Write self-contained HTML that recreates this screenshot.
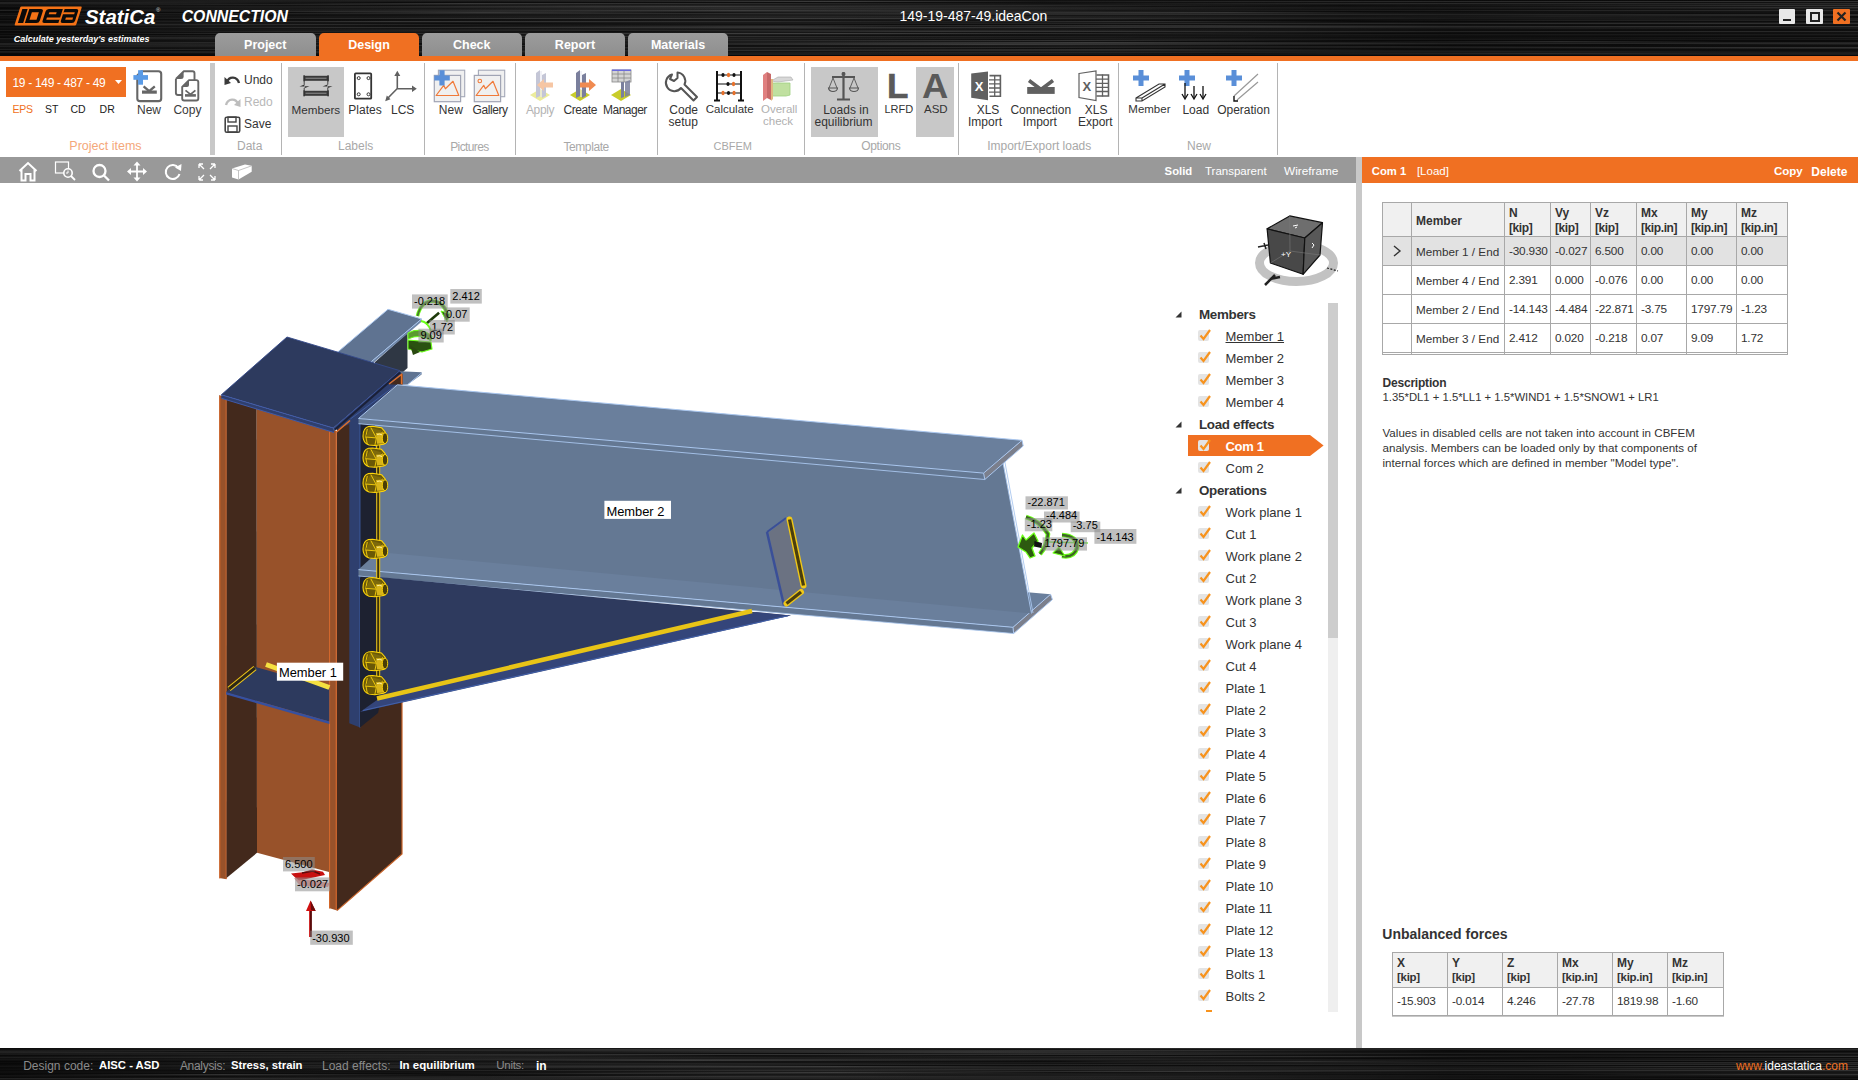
<!DOCTYPE html><html><head><meta charset="utf-8"><style>
html,body{margin:0;padding:0;}
body{width:1858px;height:1080px;overflow:hidden;position:relative;background:#fff;font-family:"Liberation Sans",sans-serif;}
.t{position:absolute;white-space:nowrap;line-height:1;}
.abs{position:absolute;}
svg{position:absolute;overflow:visible}
</style></head><body>
<div style="position:absolute;left:0;top:0px;width:1858px;height:56px;background:#1c1c1c;overflow:hidden"><div style="position:absolute;left:0;top:0px;width:1858px;height:1px;background:linear-gradient(90deg,rgb(34,34,34) 0%,rgb(38,38,38) 29%,rgb(18,18,18) 51%,rgb(18,18,18) 77%,rgb(14,14,14) 93%)"></div><div style="position:absolute;left:0;top:1px;width:1858px;height:1px;background:linear-gradient(90deg,rgb(26,26,26) 0%,rgb(38,38,38) 9%,rgb(26,26,26) 26%,rgb(38,38,38) 36%,rgb(62,62,62) 45%,rgb(26,26,26) 56%,rgb(62,62,62) 78%)"></div><div style="position:absolute;left:0;top:2px;width:1858px;height:1px;background:linear-gradient(90deg,rgb(62,62,62) 0%,rgb(14,14,14) 21%,rgb(14,14,14) 50%,rgb(22,22,22) 71%,rgb(22,22,22) 85%)"></div><div style="position:absolute;left:0;top:3px;width:1858px;height:1px;background:linear-gradient(90deg,rgb(62,62,62) 0%,rgb(22,22,22) 15%,rgb(62,62,62) 25%,rgb(34,34,34) 47%,rgb(18,18,18) 57%,rgb(62,62,62) 78%,rgb(52,52,52) 90%)"></div><div style="position:absolute;left:0;top:4px;width:1858px;height:1px;background:linear-gradient(90deg,rgb(34,34,34) 0%,rgb(44,44,44) 18%,rgb(26,26,26) 34%,rgb(26,26,26) 60%,rgb(30,30,30) 69%,rgb(34,34,34) 89%)"></div><div style="position:absolute;left:0;top:5px;width:1858px;height:1px;background:linear-gradient(90deg,rgb(30,30,30) 0%,rgb(18,18,18) 21%,rgb(38,38,38) 32%,rgb(34,34,34) 44%,rgb(44,44,44) 55%,rgb(18,18,18) 72%,rgb(62,62,62) 97%)"></div><div style="position:absolute;left:0;top:6px;width:1858px;height:1px;background:linear-gradient(90deg,rgb(34,34,34) 0%,rgb(34,34,34) 15%,rgb(62,62,62) 37%,rgb(18,18,18) 62%,rgb(30,30,30) 89%)"></div><div style="position:absolute;left:0;top:7px;width:1858px;height:1px;background:linear-gradient(90deg,rgb(18,18,18) 0%,rgb(30,30,30) 9%,rgb(44,44,44) 32%,rgb(38,38,38) 46%,rgb(34,34,34) 73%,rgb(44,44,44) 82%,rgb(62,62,62) 98%)"></div><div style="position:absolute;left:0;top:8px;width:1858px;height:1px;background:linear-gradient(90deg,rgb(14,14,14) 0%,rgb(30,30,30) 13%,rgb(26,26,26) 24%,rgb(44,44,44) 40%,rgb(44,44,44) 50%,rgb(30,30,30) 67%,rgb(38,38,38) 94%)"></div><div style="position:absolute;left:0;top:9px;width:1858px;height:1px;background:linear-gradient(90deg,rgb(30,30,30) 0%,rgb(34,34,34) 24%,rgb(38,38,38) 47%,rgb(22,22,22) 76%,rgb(22,22,22) 85%,rgb(26,26,26) 99%)"></div><div style="position:absolute;left:0;top:10px;width:1858px;height:1px;background:linear-gradient(90deg,rgb(62,62,62) 0%,rgb(30,30,30) 12%,rgb(38,38,38) 20%,rgb(62,62,62) 40%,rgb(22,22,22) 60%,rgb(52,52,52) 84%)"></div><div style="position:absolute;left:0;top:11px;width:1858px;height:1px;background:linear-gradient(90deg,rgb(14,14,14) 0%,rgb(52,52,52) 18%,rgb(38,38,38) 35%,rgb(44,44,44) 51%,rgb(14,14,14) 73%,rgb(26,26,26) 85%)"></div><div style="position:absolute;left:0;top:12px;width:1858px;height:1px;background:linear-gradient(90deg,rgb(18,18,18) 0%,rgb(14,14,14) 15%,rgb(62,62,62) 26%,rgb(18,18,18) 37%,rgb(62,62,62) 66%,rgb(26,26,26) 74%,rgb(22,22,22) 96%)"></div><div style="position:absolute;left:0;top:13px;width:1858px;height:1px;background:linear-gradient(90deg,rgb(34,34,34) 0%,rgb(44,44,44) 21%,rgb(44,44,44) 32%,rgb(44,44,44) 62%,rgb(30,30,30) 80%,rgb(18,18,18) 90%)"></div><div style="position:absolute;left:0;top:14px;width:1858px;height:1px;background:linear-gradient(90deg,rgb(30,30,30) 0%,rgb(22,22,22) 19%,rgb(26,26,26) 38%,rgb(52,52,52) 67%,rgb(52,52,52) 83%)"></div><div style="position:absolute;left:0;top:15px;width:1858px;height:1px;background:linear-gradient(90deg,rgb(52,52,52) 0%,rgb(18,18,18) 15%,rgb(30,30,30) 38%,rgb(22,22,22) 57%,rgb(26,26,26) 73%,rgb(52,52,52) 93%)"></div><div style="position:absolute;left:0;top:16px;width:1858px;height:1px;background:linear-gradient(90deg,rgb(26,26,26) 0%,rgb(26,26,26) 21%,rgb(38,38,38) 47%,rgb(26,26,26) 72%,rgb(44,44,44) 84%,rgb(14,14,14) 100%)"></div><div style="position:absolute;left:0;top:17px;width:1858px;height:1px;background:linear-gradient(90deg,rgb(30,30,30) 0%,rgb(26,26,26) 18%,rgb(34,34,34) 42%,rgb(34,34,34) 59%,rgb(34,34,34) 88%,rgb(18,18,18) 98%)"></div><div style="position:absolute;left:0;top:18px;width:1858px;height:1px;background:linear-gradient(90deg,rgb(26,26,26) 0%,rgb(44,44,44) 15%,rgb(62,62,62) 37%,rgb(44,44,44) 64%,rgb(34,34,34) 92%)"></div><div style="position:absolute;left:0;top:19px;width:1858px;height:1px;background:linear-gradient(90deg,rgb(18,18,18) 0%,rgb(18,18,18) 26%,rgb(26,26,26) 54%,rgb(22,22,22) 73%,rgb(34,34,34) 90%)"></div><div style="position:absolute;left:0;top:20px;width:1858px;height:1px;background:linear-gradient(90deg,rgb(38,38,38) 0%,rgb(18,18,18) 18%,rgb(22,22,22) 42%,rgb(14,14,14) 72%,rgb(44,44,44) 83%)"></div><div style="position:absolute;left:0;top:21px;width:1858px;height:1px;background:linear-gradient(90deg,rgb(22,22,22) 0%,rgb(62,62,62) 21%,rgb(34,34,34) 51%,rgb(52,52,52) 62%,rgb(14,14,14) 73%,rgb(18,18,18) 99%)"></div><div style="position:absolute;left:0;top:22px;width:1858px;height:1px;background:linear-gradient(90deg,rgb(22,22,22) 0%,rgb(26,26,26) 18%,rgb(26,26,26) 44%,rgb(26,26,26) 52%,rgb(26,26,26) 67%,rgb(34,34,34) 92%)"></div><div style="position:absolute;left:0;top:23px;width:1858px;height:1px;background:linear-gradient(90deg,rgb(38,38,38) 0%,rgb(14,14,14) 26%,rgb(34,34,34) 54%,rgb(62,62,62) 82%)"></div><div style="position:absolute;left:0;top:24px;width:1858px;height:1px;background:linear-gradient(90deg,rgb(52,52,52) 0%,rgb(52,52,52) 17%,rgb(22,22,22) 28%,rgb(14,14,14) 48%,rgb(22,22,22) 75%,rgb(22,22,22) 96%)"></div><div style="position:absolute;left:0;top:25px;width:1858px;height:1px;background:linear-gradient(90deg,rgb(44,44,44) 0%,rgb(18,18,18) 22%,rgb(34,34,34) 42%,rgb(52,52,52) 65%,rgb(18,18,18) 85%)"></div><div style="position:absolute;left:0;top:26px;width:1858px;height:1px;background:linear-gradient(90deg,rgb(14,14,14) 0%,rgb(30,30,30) 13%,rgb(18,18,18) 22%,rgb(52,52,52) 42%,rgb(18,18,18) 50%,rgb(62,62,62) 68%,rgb(62,62,62) 97%)"></div><div style="position:absolute;left:0;top:27px;width:1858px;height:1px;background:linear-gradient(90deg,rgb(30,30,30) 0%,rgb(52,52,52) 18%,rgb(52,52,52) 44%,rgb(52,52,52) 72%,rgb(30,30,30) 100%)"></div><div style="position:absolute;left:0;top:28px;width:1858px;height:1px;background:linear-gradient(90deg,rgb(26,26,26) 0%,rgb(22,22,22) 26%,rgb(38,38,38) 44%,rgb(18,18,18) 61%,rgb(38,38,38) 84%,rgb(30,30,30) 94%)"></div><div style="position:absolute;left:0;top:29px;width:1858px;height:1px;background:linear-gradient(90deg,rgb(22,22,22) 0%,rgb(34,34,34) 29%,rgb(22,22,22) 40%,rgb(26,26,26) 69%,rgb(18,18,18) 94%)"></div><div style="position:absolute;left:0;top:30px;width:1858px;height:1px;background:linear-gradient(90deg,rgb(44,44,44) 0%,rgb(26,26,26) 12%,rgb(38,38,38) 23%,rgb(38,38,38) 53%,rgb(26,26,26) 68%,rgb(18,18,18) 84%)"></div><div style="position:absolute;left:0;top:31px;width:1858px;height:1px;background:linear-gradient(90deg,rgb(14,14,14) 0%,rgb(44,44,44) 15%,rgb(14,14,14) 33%,rgb(52,52,52) 50%,rgb(52,52,52) 71%)"></div><div style="position:absolute;left:0;top:32px;width:1858px;height:1px;background:linear-gradient(90deg,rgb(18,18,18) 0%,rgb(26,26,26) 30%,rgb(18,18,18) 59%,rgb(30,30,30) 69%,rgb(22,22,22) 78%,rgb(22,22,22) 92%)"></div><div style="position:absolute;left:0;top:33px;width:1858px;height:1px;background:linear-gradient(90deg,rgb(30,30,30) 0%,rgb(52,52,52) 17%,rgb(62,62,62) 45%,rgb(34,34,34) 64%,rgb(14,14,14) 74%,rgb(22,22,22) 100%)"></div><div style="position:absolute;left:0;top:34px;width:1858px;height:1px;background:linear-gradient(90deg,rgb(18,18,18) 0%,rgb(14,14,14) 14%,rgb(30,30,30) 36%,rgb(26,26,26) 46%,rgb(18,18,18) 55%,rgb(34,34,34) 73%)"></div><div style="position:absolute;left:0;top:35px;width:1858px;height:1px;background:linear-gradient(90deg,rgb(38,38,38) 0%,rgb(30,30,30) 28%,rgb(14,14,14) 50%,rgb(26,26,26) 70%,rgb(22,22,22) 98%)"></div><div style="position:absolute;left:0;top:36px;width:1858px;height:1px;background:linear-gradient(90deg,rgb(22,22,22) 0%,rgb(30,30,30) 12%,rgb(52,52,52) 34%,rgb(30,30,30) 59%,rgb(22,22,22) 77%,rgb(14,14,14) 91%)"></div><div style="position:absolute;left:0;top:37px;width:1858px;height:1px;background:linear-gradient(90deg,rgb(14,14,14) 0%,rgb(52,52,52) 8%,rgb(26,26,26) 28%,rgb(26,26,26) 48%,rgb(18,18,18) 76%,rgb(38,38,38) 99%)"></div><div style="position:absolute;left:0;top:38px;width:1858px;height:1px;background:linear-gradient(90deg,rgb(52,52,52) 0%,rgb(38,38,38) 26%,rgb(30,30,30) 56%,rgb(26,26,26) 79%,rgb(22,22,22) 94%)"></div><div style="position:absolute;left:0;top:39px;width:1858px;height:1px;background:linear-gradient(90deg,rgb(34,34,34) 0%,rgb(22,22,22) 30%,rgb(30,30,30) 38%,rgb(14,14,14) 55%,rgb(38,38,38) 65%,rgb(30,30,30) 92%)"></div><div style="position:absolute;left:0;top:40px;width:1858px;height:1px;background:linear-gradient(90deg,rgb(30,30,30) 0%,rgb(22,22,22) 9%,rgb(44,44,44) 20%,rgb(34,34,34) 29%,rgb(52,52,52) 58%,rgb(14,14,14) 73%)"></div><div style="position:absolute;left:0;top:41px;width:1858px;height:1px;background:linear-gradient(90deg,rgb(30,30,30) 0%,rgb(22,22,22) 13%,rgb(38,38,38) 21%,rgb(30,30,30) 31%,rgb(26,26,26) 50%,rgb(14,14,14) 63%,rgb(18,18,18) 73%,rgb(62,62,62) 84%,rgb(14,14,14) 93%)"></div><div style="position:absolute;left:0;top:42px;width:1858px;height:1px;background:linear-gradient(90deg,rgb(26,26,26) 0%,rgb(52,52,52) 10%,rgb(22,22,22) 37%,rgb(62,62,62) 59%,rgb(34,34,34) 76%,rgb(44,44,44) 100%)"></div><div style="position:absolute;left:0;top:43px;width:1858px;height:1px;background:linear-gradient(90deg,rgb(62,62,62) 0%,rgb(14,14,14) 22%,rgb(52,52,52) 48%,rgb(52,52,52) 70%,rgb(52,52,52) 81%)"></div><div style="position:absolute;left:0;top:44px;width:1858px;height:1px;background:linear-gradient(90deg,rgb(62,62,62) 0%,rgb(14,14,14) 26%,rgb(62,62,62) 53%,rgb(26,26,26) 78%,rgb(14,14,14) 88%,rgb(34,34,34) 99%)"></div><div style="position:absolute;left:0;top:45px;width:1858px;height:1px;background:linear-gradient(90deg,rgb(38,38,38) 0%,rgb(52,52,52) 26%,rgb(14,14,14) 36%,rgb(26,26,26) 57%,rgb(14,14,14) 76%,rgb(18,18,18) 94%)"></div><div style="position:absolute;left:0;top:46px;width:1858px;height:1px;background:linear-gradient(90deg,rgb(52,52,52) 0%,rgb(18,18,18) 28%,rgb(18,18,18) 50%,rgb(44,44,44) 75%,rgb(18,18,18) 88%)"></div><div style="position:absolute;left:0;top:47px;width:1858px;height:1px;background:linear-gradient(90deg,rgb(26,26,26) 0%,rgb(26,26,26) 24%,rgb(44,44,44) 37%,rgb(38,38,38) 56%,rgb(30,30,30) 66%,rgb(62,62,62) 91%)"></div><div style="position:absolute;left:0;top:48px;width:1858px;height:1px;background:linear-gradient(90deg,rgb(26,26,26) 0%,rgb(22,22,22) 10%,rgb(30,30,30) 25%,rgb(22,22,22) 47%,rgb(14,14,14) 55%,rgb(18,18,18) 74%,rgb(44,44,44) 97%)"></div><div style="position:absolute;left:0;top:49px;width:1858px;height:1px;background:linear-gradient(90deg,rgb(52,52,52) 0%,rgb(44,44,44) 14%,rgb(18,18,18) 33%,rgb(52,52,52) 62%,rgb(18,18,18) 75%)"></div><div style="position:absolute;left:0;top:50px;width:1858px;height:1px;background:linear-gradient(90deg,rgb(14,14,14) 0%,rgb(18,18,18) 14%,rgb(44,44,44) 40%,rgb(38,38,38) 70%,rgb(26,26,26) 83%,rgb(18,18,18) 93%)"></div><div style="position:absolute;left:0;top:51px;width:1858px;height:1px;background:linear-gradient(90deg,rgb(52,52,52) 0%,rgb(34,34,34) 14%,rgb(52,52,52) 25%,rgb(18,18,18) 39%,rgb(26,26,26) 62%,rgb(44,44,44) 81%,rgb(22,22,22) 98%)"></div><div style="position:absolute;left:0;top:52px;width:1858px;height:1px;background:linear-gradient(90deg,rgb(44,44,44) 0%,rgb(38,38,38) 23%,rgb(22,22,22) 38%,rgb(38,38,38) 55%,rgb(34,34,34) 70%,rgb(34,34,34) 78%)"></div><div style="position:absolute;left:0;top:53px;width:1858px;height:1px;background:linear-gradient(90deg,rgb(18,18,18) 0%,rgb(26,26,26) 29%,rgb(30,30,30) 52%,rgb(18,18,18) 66%,rgb(62,62,62) 83%,rgb(38,38,38) 92%)"></div><div style="position:absolute;left:0;top:54px;width:1858px;height:1px;background:linear-gradient(90deg,rgb(14,14,14) 0%,rgb(14,14,14) 14%,rgb(30,30,30) 41%,rgb(22,22,22) 63%,rgb(30,30,30) 76%,rgb(34,34,34) 94%)"></div><div style="position:absolute;left:0;top:55px;width:1858px;height:1px;background:linear-gradient(90deg,rgb(34,34,34) 0%,rgb(38,38,38) 25%,rgb(38,38,38) 53%,rgb(52,52,52) 81%)"></div><div style="position:absolute;left:0;top:0;width:1858px;height:100%;background:linear-gradient(90deg,rgba(0,0,0,.45) 0%,rgba(0,0,0,.2) 12%,rgba(0,0,0,0) 40%,rgba(0,0,0,.05) 60%,rgba(0,0,0,.35) 78%,rgba(0,0,0,.2) 100%)"></div></div>
<div class="abs" style="left:0;top:55px;width:1858px;height:1px;background:#06090d"></div>
<svg style="left:0;top:0" width="300" height="56">
<g transform="matrix(1 0 -0.32 1 8.224 0)">
<rect x="14.3" y="6.5" width="61.6" height="19" rx="1.2" fill="#f47216"/>
<path d="M17 9 H22.3 V23 H17 Z" fill="#0a0a0a"/>
<path d="M24 9 H35.5 Q38.2 9 38.2 11.5 V20.5 Q38.2 23 35.5 23 H24 Z" fill="#0a0a0a"/>
<rect x="27.6" y="12.3" width="7" height="7.4" fill="#f47216"/>
<path d="M41 11.5 Q41 9 43.5 9 H57.5 V23 H43.5 Q41 23 41 20.5 Z" fill="#0a0a0a"/>
<rect x="45" y="12.3" width="7.4" height="1.9" fill="#f47216"/>
<rect x="44.3" y="17.5" width="13.5" height="2.2" fill="#f47216"/>
<path d="M59.3 9 H71 Q73.5 9 73.5 11.5 V20.5 Q73.5 23 71 23 H61.8 Q59.3 23 59.3 20.5 Z" fill="#0a0a0a"/>
<rect x="59" y="12.3" width="11.5" height="1.9" fill="#f47216"/>
<rect x="63.3" y="17.5" width="7.2" height="2.2" fill="#f47216"/>
</g>
<text x="85" y="23.5" font-family="Liberation Sans" font-weight="bold" font-style="italic" font-size="20.4" fill="#fff">StatiCa</text>
<text x="156" y="12" font-family="Liberation Sans" font-size="6" fill="#ddd">®</text>
<text x="181.7" y="21.8" font-family="Liberation Sans" font-weight="bold" font-style="italic" font-size="15.8" fill="#fff">CONNECTION</text>
<text x="13.7" y="42" font-family="Liberation Sans" font-weight="bold" font-style="italic" font-size="9" fill="#fff">Calculate yesterday's estimates</text>
</svg>
<div class="t" style="left:899.4px;top:8.6px;font-size:14px;color:#fff;">149-19-487-49.ideaCon</div>
<div class="abs" style="left:1779px;top:9px;width:16px;height:15px;background:#e8e8e8;border-radius:1px"><div class="abs" style="left:4px;top:10px;width:8px;height:2px;background:#222"></div></div>
<div class="abs" style="left:1806px;top:9px;width:17px;height:15px;background:#e8e8e8;border-radius:1px"><div class="abs" style="left:4px;top:3px;width:6px;height:6px;border:2px solid #222"></div></div>
<div class="abs" style="left:1833px;top:9px;width:17px;height:15px;background:#f07022;border-radius:1px"><svg style="left:0;top:0" width="17" height="15"><path d="M4.5 3.5 L12.5 11.5 M12.5 3.5 L4.5 11.5" stroke="#222" stroke-width="2.2"/></svg></div>
<div class="abs" style="left:215px;top:33px;width:100.5px;height:24px;background:linear-gradient(#9c9c9c,#8e8e8e);border-radius:5px 5px 0 0"></div>
<div class="t" style="left:65.25px;width:400px;text-align:center;top:38.9px;font-size:12.5px;color:#fff;font-weight:bold;">Project</div>
<div class="abs" style="left:319px;top:33px;width:100px;height:24px;background:#f07022;border-radius:5px 5px 0 0"></div>
<div class="t" style="left:169.0px;width:400px;text-align:center;top:38.9px;font-size:12.5px;color:#fff;font-weight:bold;">Design</div>
<div class="abs" style="left:422px;top:33px;width:99.5px;height:24px;background:linear-gradient(#9c9c9c,#8e8e8e);border-radius:5px 5px 0 0"></div>
<div class="t" style="left:271.75px;width:400px;text-align:center;top:38.9px;font-size:12.5px;color:#fff;font-weight:bold;">Check</div>
<div class="abs" style="left:525px;top:33px;width:100px;height:24px;background:linear-gradient(#9c9c9c,#8e8e8e);border-radius:5px 5px 0 0"></div>
<div class="t" style="left:375.0px;width:400px;text-align:center;top:38.9px;font-size:12.5px;color:#fff;font-weight:bold;">Report</div>
<div class="abs" style="left:628px;top:33px;width:100px;height:24px;background:linear-gradient(#9c9c9c,#8e8e8e);border-radius:5px 5px 0 0"></div>
<div class="t" style="left:478.0px;width:400px;text-align:center;top:38.9px;font-size:12.5px;color:#fff;font-weight:bold;">Materials</div>
<div class="abs" style="left:0;top:56px;width:1858px;height:5px;background:#f07022"></div>
<div class="abs" style="left:6px;top:67px;width:120px;height:30px;background:#f07022"></div>
<div class="t" style="left:12.4px;top:77.2px;font-size:12px;color:#fff;letter-spacing:-0.3px;">19 - 149 - 487 - 49</div>
<svg style="left:115px;top:80px" width="8" height="5"><path d="M0 0 H7 L3.5 4 Z" fill="#fff"/></svg>
<div class="t" style="left:12.5px;top:103.9px;font-size:10.5px;color:#f07022;letter-spacing:-0.2px">EPS</div>
<div class="t" style="left:45px;top:103.9px;font-size:10.5px;color:#1a1a1a;">ST</div>
<div class="t" style="left:70.5px;top:103.9px;font-size:10.5px;color:#1a1a1a;">CD</div>
<div class="t" style="left:99.6px;top:103.9px;font-size:10.5px;color:#1a1a1a;">DR</div>
<svg style="left:133px;top:70px" width="30" height="33">
<path d="M4.3 5.5 L8.4 1.3 H25.5 Q28.2 1.3 28.2 4 V28.4 Q28.2 31.1 25.5 31.1 H7 Q4.3 31.1 4.3 28.4 Z" fill="#fff" stroke="#666" stroke-width="2.1" stroke-linejoin="round"/>
<path d="M10.6 16.3 L16.2 21.2 L21.8 16.3" fill="none" stroke="#666" stroke-width="2.3"/>
<rect x="9" y="20.5" width="14.8" height="3.2" fill="#666"/>
<rect x="0.4" y="5.1" width="14.6" height="4.7" fill="#5a9be6"/><rect x="5.1" y="0.2" width="4.9" height="14.5" fill="#5a9be6"/>
</svg>
<svg style="left:175px;top:70px" width="26" height="33">
<path d="M0.9 9 L8.6 1.3 H17.5 Q19.5 1.3 19.5 3.3 V10.5 M7.2 25 H3 Q0.9 25 0.9 23 V9" fill="none" stroke="#666" stroke-width="1.9" stroke-linejoin="round"/>
<path d="M0.9 9 L8.6 1.3 V6.5 Q8.6 9 6 9 Z" fill="#666"/>
<path d="M7.2 17 L14 10.1 H21.3 Q23.3 10.1 23.3 12.1 V28.5 Q23.3 30.5 21.3 30.5 H9.2 Q7.2 30.5 7.2 28.5 Z" fill="#fff" stroke="#666" stroke-width="1.9" stroke-linejoin="round"/>
<path d="M7.2 17 L14 10.1 V15 Q14 17 12 17 Z" fill="#666"/>
<path d="M10.5 20.4 L15.5 24.4 L20.4 20.4" fill="none" stroke="#666" stroke-width="1.8"/>
<rect x="10" y="24.1" width="10.9" height="2.6" fill="#666"/>
</svg>
<div class="t" style="left:137px;top:103.9px;font-size:12px;color:#3a3a3a;">New</div>
<div class="t" style="left:173.4px;top:103.9px;font-size:12px;color:#3a3a3a;">Copy</div>
<div class="t" style="left:69.3px;top:140.2px;font-size:12.5px;color:#f4a77a;">Project items</div>
<div class="abs" style="left:210px;top:63px;width:5px;height:92px;background:#c8c8c8"></div>
<div class="abs" style="left:281px;top:63px;width:1px;height:92px;background:#b4b4b4"></div>
<div class="abs" style="left:424px;top:63px;width:1px;height:92px;background:#b4b4b4"></div>
<div class="abs" style="left:515px;top:63px;width:1px;height:92px;background:#b4b4b4"></div>
<div class="abs" style="left:657px;top:63px;width:1px;height:92px;background:#b4b4b4"></div>
<div class="abs" style="left:804px;top:63px;width:1px;height:92px;background:#b4b4b4"></div>
<div class="abs" style="left:958px;top:63px;width:1px;height:92px;background:#b4b4b4"></div>
<div class="abs" style="left:1118px;top:63px;width:1px;height:92px;background:#b4b4b4"></div>
<div class="abs" style="left:1277px;top:63px;width:1px;height:92px;background:#b4b4b4"></div>
<svg style="left:224px;top:73px" width="17" height="60">
<path d="M3 9 C5 3, 13 3, 15 10" fill="none" stroke="#3a3a3a" stroke-width="2.4"/>
<path d="M0.5 4 L7 10 L0.5 12 Z" fill="#3a3a3a"/>
<path d="M14 31 C12 25, 4 25, 2 32" fill="none" stroke="#bdbdbd" stroke-width="2.4"/>
<path d="M16.5 26 L10 32 L16.5 34 Z" fill="#bdbdbd"/>
<rect x="1.2" y="44.2" width="14.5" height="15" rx="1.5" fill="none" stroke="#444" stroke-width="1.6"/>
<rect x="4" y="44" width="8" height="5" fill="none" stroke="#444" stroke-width="1.4"/>
<rect x="4" y="53" width="9" height="6" fill="none" stroke="#444" stroke-width="1.4"/>
</svg>
<div class="t" style="left:244px;top:74.1px;font-size:12px;color:#333;">Undo</div>
<div class="t" style="left:244px;top:96.1px;font-size:12px;color:#b8b8b8;">Redo</div>
<div class="t" style="left:244px;top:118.0px;font-size:12px;color:#333;">Save</div>
<div class="t" style="left:237px;top:140.3px;font-size:12px;color:#a8a8a8;">Data</div>
<div class="abs" style="left:288px;top:67px;width:56px;height:70px;background:#c8c8c8"></div>
<svg style="left:299px;top:75px" width="34" height="22">
<rect x="5" y="0.8" width="24" height="5" fill="#3a3a3a"/><rect x="6.5" y="2.6" width="21" height="1.4" fill="#777"/>
<rect x="5" y="15.8" width="24" height="5" fill="#3a3a3a"/><rect x="6.5" y="17.6" width="21" height="1.4" fill="#777"/>
<rect x="4.3" y="0.3" width="1.6" height="6" fill="#333"/><rect x="28.3" y="0.3" width="1.6" height="6" fill="#333"/>
<rect x="4.3" y="15.3" width="1.6" height="6" fill="#333"/><rect x="28.3" y="15.3" width="1.6" height="6" fill="#333"/>
<path d="M5.2 6 V9.5 M5.2 13 V16 M28.8 6 V9.5 M28.8 13 V16" stroke="#444" stroke-width="1"/>
<path d="M0.5 11.5 L6 9.3 L5 11.3 L10.5 11.3 L5.3 13.2 L6 11.6 Z" fill="#333"/>
<path d="M23.5 11.5 L29 9.3 L28 11.3 L33.5 11.3 L28.3 13.2 L29 11.6 Z" fill="#333"/>
</svg>
<div class="t" style="left:291.5px;top:104.2px;font-size:11.7px;color:#333;">Members</div>
<svg style="left:353px;top:72px" width="20" height="28">
<rect x="1.9" y="1.4" width="16.3" height="25.3" rx="0.8" fill="none" stroke="#333" stroke-width="1.8"/>
<circle cx="5.7" cy="6.1" r="1.5" fill="none" stroke="#333" stroke-width="1"/><circle cx="15.5" cy="6.1" r="1.5" fill="none" stroke="#333" stroke-width="1"/>
<circle cx="5.7" cy="22.3" r="1.5" fill="none" stroke="#333" stroke-width="1"/><circle cx="15.5" cy="22.3" r="1.5" fill="none" stroke="#333" stroke-width="1"/>
</svg>
<div class="t" style="left:348.3px;top:104.1px;font-size:12px;color:#333;">Plates</div>
<svg style="left:384px;top:70px" width="34" height="34">
<path d="M13.3 18.5 V4 M13.3 18.5 L29 18.8 M13.3 18.5 L3.5 28.5" stroke="#606060" stroke-width="1.6" fill="none"/>
<path d="M10.3 6 L13.3 0.8 L16.3 6 Z M28 15.6 L32.8 18.8 L28 22 Z M1.2 31.2 L2.8 25.4 L6.5 29.2 Z" fill="#606060"/>
</svg>
<div class="t" style="left:391px;top:104.1px;font-size:12px;color:#333;">LCS</div>
<div class="t" style="left:338px;top:140.3px;font-size:12px;color:#a8a8a8;">Labels</div>
<svg style="left:433px;top:69px" width="34" height="34">
<rect x="5.4" y="1.2" width="26.3" height="26.5" fill="#f0f0f0" stroke="#a4a8b8" stroke-width="1.1"/>
<rect x="1.3" y="6.4" width="26.3" height="26.3" fill="#f0f0f0" stroke="#a0a4b4" stroke-width="1.2"/>
<path d="M3.1 26.5 L10.7 16.3 L12.4 19.8 L20 12.3 L25.8 26.5 Z" fill="none" stroke="#f07a3a" stroke-width="1.2" stroke-linejoin="round"/><path d="M1.3 9 H16.8 M9 1.2 V16.6" stroke="#5a8fd8" stroke-width="5.2"/></svg>
<svg style="left:473px;top:69px" width="34" height="34">
<rect x="5.4" y="1.2" width="26.3" height="26.5" fill="#f0f0f0" stroke="#a4a8b8" stroke-width="1.1"/>
<rect x="1.3" y="6.4" width="26.3" height="26.3" fill="#f0f0f0" stroke="#a0a4b4" stroke-width="1.2"/>
<path d="M3.1 26.5 L10.7 16.3 L12.4 19.8 L20 12.3 L25.8 26.5 Z" fill="none" stroke="#f07a3a" stroke-width="1.2" stroke-linejoin="round"/><circle cx="6.8" cy="12" r="1.8" fill="none" stroke="#f07a3a" stroke-width="1.1"/></svg>
<div class="t" style="left:438.8px;top:104.0px;font-size:12px;color:#333;">New</div>
<div class="t" style="left:472.5px;top:104.0px;font-size:12px;color:#333;letter-spacing:-0.4px">Gallery</div>
<div class="t" style="left:450.2px;top:140.5px;font-size:12px;color:#a8a8a8;letter-spacing:-0.6px">Pictures</div>
<svg style="left:530px;top:69px" width="40" height="34" opacity="1"><path d="M0 26 L10 20 L20 26 L10 32 Z" fill="#ecec9c"/><path d="M6 4 L10 1 V27 L6 29 Z" fill="#c4c6d6"/><path d="M10 2 H12 V28 H10 Z" fill="#e8e8f0" opacity="0.6"/><path d="M12 6 L16 4 V27 L12 29 Z" fill="#c4c6d6"/><path d="M7 16 L14 10 V13.5 H23 V18.5 H14 V22 Z" fill="#f6c6a4"/></svg>
<svg style="left:570px;top:69px" width="40" height="34" opacity="1"><path d="M0 26 L10 20 L20 26 L10 32 Z" fill="#c8cc2a"/><path d="M6 4 L10 1 V27 L6 29 Z" fill="#7a7f9c"/><path d="M10 2 H12 V28 H10 Z" fill="#e8e8f0" opacity="0.6"/><path d="M12 6 L16 4 V27 L12 29 Z" fill="#7a7f9c"/><path d="M26 16 L19 10 V13.5 H10 V18.5 H19 V22 Z" fill="#f08a50"/></svg>
<svg style="left:611px;top:69px" width="40" height="34" opacity="1"><path d="M0 26 L10 20 L20 26 L10 32 Z" fill="#c8cc2a"/><rect x="1" y="1" width="19" height="12" fill="#d4d4d4" stroke="#888" stroke-width="0.8"/><path d="M1 5 H20 M1 9 H20 M7 1 V13 M13 1 V13" stroke="#888" stroke-width="0.8"/><rect x="1" y="0.5" width="19" height="1.5" fill="#6b6bdc"/><path d="M10 13 V29 L13 28 V13 Z" fill="#7a7f9c"/><path d="M14 13 V28 L19 26 V11 Z" fill="#7a7f9c" opacity="0.85"/></svg>
<div class="t" style="left:526px;top:104.0px;font-size:12px;color:#b4b4b4;letter-spacing:-0.4px">Apply</div>
<div class="t" style="left:563.4px;top:104.0px;font-size:12px;color:#333;letter-spacing:-0.4px">Create</div>
<div class="t" style="left:603px;top:104.0px;font-size:12px;color:#333;letter-spacing:-0.5px">Manager</div>
<div class="t" style="left:563.4px;top:140.5px;font-size:12px;color:#a8a8a8;letter-spacing:-0.4px">Template</div>
<svg style="left:668px;top:71px" width="31" height="31">
<path d="M4 3.5 A8.5 8.5 0 1 0 13 17 L25.5 29.5 L29 26 L16.5 13.5 A8.5 8.5 0 0 0 9.5 1.5 L9.5 7 L6 10 L2 8 Z" fill="none" stroke="#555" stroke-width="2" stroke-linejoin="round"/>
</svg>
<svg style="left:714px;top:71px" width="30" height="31">
<path d="M3 0 V29 M27 0 V29 M0 29.5 H6 M24 29.5 H30" stroke="#111" stroke-width="2"/>
<path d="M3 4 H27 M3 13 H27 M3 22 H27" stroke="#111" stroke-width="1.2"/>
<ellipse cx="9" cy="4" rx="1.6" ry="2" fill="#111"/><ellipse cx="14.5" cy="4" rx="1.6" ry="2.2" fill="#e8702a"/><ellipse cx="20" cy="4" rx="1.6" ry="2" fill="#111"/>
<ellipse cx="14" cy="13" rx="1.6" ry="2" fill="#111"/><ellipse cx="19.5" cy="13" rx="1.6" ry="2.2" fill="#e8702a"/>
<ellipse cx="9" cy="22" rx="1.6" ry="2.2" fill="#e8702a"/><ellipse cx="14.5" cy="22" rx="1.6" ry="2" fill="#111"/><ellipse cx="20" cy="22" rx="1.6" ry="2.2" fill="#e8702a"/>
</svg>
<svg style="left:762px;top:71px" width="32" height="31">
<path d="M1 4 L5 1 V27 L1 30 Z" fill="#e08080"/><path d="M5 1 L9 3 V29 L5 27 Z" fill="#c86a6a"/>
<path d="M9 10 L16 6 H29 L31 9 L16 11 Z" fill="#d8d8d8" stroke="#aaa" stroke-width="0.6"/>
<path d="M10 12 H28 V24 L24 25 H10 Z" fill="#c0e0a0" stroke="#a0d080" stroke-width="0.8"/>
<path d="M9 8 V30 L11 28 V8 Z" fill="#e0b880"/>
</svg>
<div class="t" style="left:669.3px;top:104.0px;font-size:12px;color:#333;">Code</div>
<div class="t" style="left:668.5px;top:116.2px;font-size:12px;color:#333;">setup</div>
<div class="t" style="left:705.7px;top:104.1px;font-size:11.5px;color:#333;">Calculate</div>
<div class="t" style="left:761px;top:104.1px;font-size:11.5px;color:#b0b0b0;">Overall</div>
<div class="t" style="left:763px;top:116.3px;font-size:11.5px;color:#b0b0b0;">check</div>
<div class="t" style="left:713.5px;top:140.7px;font-size:11px;color:#a8a8a8;">CBFEM</div>
<div class="abs" style="left:811px;top:67px;width:67px;height:70px;background:#c8c8c8"></div>
<div class="abs" style="left:916px;top:67px;width:38px;height:70px;background:#c8c8c8"></div>
<svg style="left:828px;top:71px" width="32" height="30">
<path d="M15.5 1 V28 M9 28.5 H22 M4 6 H27" stroke="#555" stroke-width="2.2"/>
<circle cx="15.5" cy="3" r="2" fill="#555"/>
<path d="M5 7 L1 17 M5 7 L9 17 M26 7 L22 17 M26 7 L30 17" stroke="#555" stroke-width="0.9"/>
<path d="M0.5 17 H9.5 A4.5 3.5 0 0 1 0.5 17 Z M21.5 17 H30.5 A4.5 3.5 0 0 1 21.5 17 Z" fill="none" stroke="#555" stroke-width="1.2"/>
</svg>
<div class="t" style="left:823.2px;top:104.1px;font-size:12px;color:#333;">Loads in</div>
<div class="t" style="left:814.5px;top:116.1px;font-size:12px;color:#333;">equilibrium</div>
<div class="t" style="left:887px;top:68px;font-size:35px;font-weight:bold;color:#5a5a5a;-webkit-text-stroke:0.6px #5a5a5a">L</div>
<div class="t" style="left:884.4px;top:104.3px;font-size:11px;color:#333;">LRFD</div>
<div class="t" style="left:921.5px;top:68px;font-size:35px;font-weight:bold;color:#5a5a5a;transform:scaleX(1.04);transform-origin:left">A</div>
<div class="t" style="left:924px;top:104.2px;font-size:11.5px;color:#333;">ASD</div>
<div class="t" style="left:861.2px;top:140.1px;font-size:12px;color:#a8a8a8;letter-spacing:-0.3px">Options</div>
<svg style="left:970px;top:71px" width="34" height="32">
<path d="M1.2 2.6 L18 0.6 V29.2 L1.2 26.8 Z" fill="#606060"/>
<path d="M19.5 4.6 H30.4 V25.3 H19.5" fill="none" stroke="#606060" stroke-width="1.6"/>
<path d="M19 8.8 H30 M19 12.9 H30 M19 17 H30 M19 21.1 H30 M24.7 4 V26" stroke="#606060" stroke-width="1.3"/>
<text x="4.8" y="20" font-family="Liberation Sans" font-weight="bold" font-size="13" fill="#fff">X</text>
</svg>
<svg style="left:1026px;top:78px" width="30" height="17">
<rect x="1.2" y="9" width="27.5" height="6.9" fill="#606060"/>
<path d="M3 2.5 L15 11.5 L27 2.5" fill="none" stroke="#606060" stroke-width="3.6"/>
</svg>
<svg style="left:1078px;top:70px" width="34" height="32">
<path d="M1 3.5 L18 1 V30.5 L1 27.5 Z" fill="#fff" stroke="#606060" stroke-width="1.2"/>
<path d="M18.5 5 H30.5 V26 H18.5" fill="none" stroke="#606060" stroke-width="1.6"/>
<path d="M18 9.2 H30 M18 13.3 H30 M18 17.4 H30 M18 21.5 H30 M24.5 4.5 V26.5" stroke="#606060" stroke-width="1.3"/>
<text x="4.5" y="21" font-family="Liberation Sans" font-weight="bold" font-size="13" fill="#606060">X</text>
</svg>
<div class="t" style="left:976.7px;top:104.1px;font-size:12px;color:#333;">XLS</div>
<div class="t" style="left:968px;top:116.1px;font-size:12px;color:#333;">Import</div>
<div class="t" style="left:1010.4px;top:104.1px;font-size:12px;color:#333;">Connection</div>
<div class="t" style="left:1022.8px;top:116.1px;font-size:12px;color:#333;">Import</div>
<div class="t" style="left:1084.8px;top:104.1px;font-size:12px;color:#333;">XLS</div>
<div class="t" style="left:1078px;top:116.1px;font-size:12px;color:#333;">Export</div>
<div class="t" style="left:987.2px;top:140.1px;font-size:12px;color:#a8a8a8;">Import/Export loads</div>
<svg style="left:1133px;top:70px" width="34" height="32">
<path d="M0 8 H16 M8 0 V16" stroke="#5a8fd8" stroke-width="5"/>
<path d="M3 28 L26 14 H32 V17 L9 31 H3 Z M3 28 H9 V31 M9 28 L32 14" fill="none" stroke="#333" stroke-width="1.1"/>
</svg>
<svg style="left:1179px;top:70px" width="30" height="32">
<path d="M0 8 H16 M8 0 V16" stroke="#5a8fd8" stroke-width="5"/>
<path d="M6 13 V28 M15 16 V28 M24 16 V28" stroke="#111" stroke-width="1.3"/>
<path d="M3 24 L6 29 L9 24 M12 24 L15 29 L18 24 M21 24 L24 29 L27 24" fill="none" stroke="#111" stroke-width="1.3"/>
</svg>
<svg style="left:1226px;top:70px" width="34" height="32">
<path d="M0 8 H16 M8 0 V16" stroke="#5a8fd8" stroke-width="5"/>
<path d="M8 26 L32 4 M11 30 L32 12" stroke="#999" stroke-width="1.2"/>
<path d="M8 26 V31 H12" stroke="#111" stroke-width="1.4" fill="none"/>
</svg>
<div class="t" style="left:1128.3px;top:104.2px;font-size:11.5px;color:#333;">Member</div>
<div class="t" style="left:1182.4px;top:104.1px;font-size:12px;color:#333;">Load</div>
<div class="t" style="left:1217.2px;top:104.1px;font-size:12px;color:#333;">Operation</div>
<div class="t" style="left:1187px;top:140.1px;font-size:12px;color:#a8a8a8;">New</div>
<div class="abs" style="left:0;top:157px;width:1356px;height:26px;background:#999999"></div>
<svg style="left:0;top:157px" width="260" height="26">
<g fill="none" stroke="#fff" stroke-width="2">
<path d="M19.5 14 L28 6 L36.5 14 M21.5 12.5 V23.5 H25.5 V17 H30.5 V23.5 H34.5 V12.5"/>
</g>
<g fill="none" stroke="#fff">
<rect x="55.5" y="5" width="13" height="11" stroke-width="1.2"/>
<circle cx="68" cy="16" r="4.2" stroke-width="1.6" fill="#999"/>
<path d="M71 19 L75 23" stroke-width="1.8"/>
<path d="M68 13.5 V16 H66" stroke-width="1"/>
</g>
<g fill="none" stroke="#fff" stroke-width="2.3">
<circle cx="99.5" cy="14" r="6"/>
<path d="M104 18.5 L109 23.5"/>
</g>
<g fill="#fff" stroke="#fff">
<path d="M137 8 V21 M130.5 14.5 H143.5" stroke-width="1.8"/>
<path d="M137 4.5 L133.5 8.5 H140.5 Z M137 24.5 L133.5 20.5 H140.5 Z M127 14.5 L131 11 V18 Z M147 14.5 L143 11 V18 Z" stroke="none"/>
</g>
<g fill="none" stroke="#fff" stroke-width="2">
<path d="M178.5 11 A7 7 0 1 0 179.5 17"/>
</g>
<path d="M175 10.5 L181.5 7 L181 14 Z" fill="#fff"/>
<g fill="none" stroke="#fff" stroke-width="1.3">
<path d="M199 7 L204 12 M199 7 H203 M199 7 V11"/>
<path d="M215 7 L210 12 M215 7 H211 M215 7 V11"/>
<path d="M199 23 L204 18 M199 23 H203 M199 23 V19"/>
<path d="M215 23 L210 18 M215 23 H211 M215 23 V19"/>
</g>
<path d="M232 11.5 L245 7.5 L251.7 8.8 V14.7 L238.5 22.4 L232 20.5 Z" fill="#fff"/>
<path d="M232 11.5 L238.5 13.5 L251.7 8.8 M238.5 13.5 V22.4" stroke="#aaa" stroke-width="0.7" fill="none"/>
</svg>
<div class="t" style="left:1164.6px;top:165.7px;font-size:11.3px;color:#fff;font-weight:bold;">Solid</div>
<div class="t" style="left:1205px;top:165.7px;font-size:11.5px;color:#fff;">Transparent</div>
<div class="t" style="left:1284px;top:165.6px;font-size:11.8px;color:#fff;">Wireframe</div>
<div class="abs" style="left:1356px;top:157px;width:6px;height:891px;background:#c8c8c8"></div>
<div class="abs" style="left:1362px;top:157px;width:496px;height:26px;background:#f07022"></div>
<div class="t" style="left:1371.8px;top:165.6px;font-size:11.3px;color:#fff;font-weight:bold;">Com 1</div>
<div class="t" style="left:1416.9px;top:165.6px;font-size:11.5px;color:#fff;">[Load]</div>
<div class="t" style="left:1774px;top:165.6px;font-size:11.5px;color:#fff;font-weight:bold;">Copy</div>
<div class="t" style="left:1811.3px;top:165.5px;font-size:12px;color:#fff;font-weight:bold;">Delete</div>
<div class="abs" style="left:1382px;top:202px;width:405px;height:34px;background:#f0f0f0"></div>
<div class="abs" style="left:1382px;top:236px;width:405px;height:29px;background:#e2e2e2"></div>
<div class="abs" style="left:1382px;top:202px;width:1px;height:152px;background:#a8a8a8"></div>
<div class="abs" style="left:1411px;top:202px;width:1px;height:152px;background:#a8a8a8"></div>
<div class="abs" style="left:1504px;top:202px;width:1px;height:152px;background:#a8a8a8"></div>
<div class="abs" style="left:1550px;top:202px;width:1px;height:152px;background:#a8a8a8"></div>
<div class="abs" style="left:1590px;top:202px;width:1px;height:152px;background:#a8a8a8"></div>
<div class="abs" style="left:1636px;top:202px;width:1px;height:152px;background:#a8a8a8"></div>
<div class="abs" style="left:1686px;top:202px;width:1px;height:152px;background:#a8a8a8"></div>
<div class="abs" style="left:1736px;top:202px;width:1px;height:152px;background:#a8a8a8"></div>
<div class="abs" style="left:1787px;top:202px;width:1px;height:152px;background:#a8a8a8"></div>
<div class="abs" style="left:1382px;top:202px;width:406px;height:1px;background:#a8a8a8"></div>
<div class="abs" style="left:1382px;top:236px;width:406px;height:1px;background:#a8a8a8"></div>
<div class="abs" style="left:1382px;top:265px;width:406px;height:1px;background:#a8a8a8"></div>
<div class="abs" style="left:1382px;top:294px;width:406px;height:1px;background:#a8a8a8"></div>
<div class="abs" style="left:1382px;top:323px;width:406px;height:1px;background:#a8a8a8"></div>
<div class="abs" style="left:1382px;top:352px;width:406px;height:1px;background:#a8a8a8"></div>
<div class="abs" style="left:1382px;top:354px;width:406px;height:1px;background:#a8a8a8"></div>
<div class="abs" style="left:1787px;top:202px;width:1px;height:153px;background:#a8a8a8"></div>
<div class="t" style="left:1416px;top:214.5px;font-size:12px;color:#333;font-weight:bold;">Member</div>
<div class="t" style="left:1509px;top:206.7px;font-size:12px;color:#333;font-weight:bold;">N</div>
<div class="t" style="left:1509px;top:222.3px;font-size:12px;color:#333;font-weight:bold;letter-spacing:-0.4px">[kip]</div>
<div class="t" style="left:1555px;top:206.7px;font-size:12px;color:#333;font-weight:bold;">Vy</div>
<div class="t" style="left:1555px;top:222.3px;font-size:12px;color:#333;font-weight:bold;letter-spacing:-0.4px">[kip]</div>
<div class="t" style="left:1595px;top:206.7px;font-size:12px;color:#333;font-weight:bold;">Vz</div>
<div class="t" style="left:1595px;top:222.3px;font-size:12px;color:#333;font-weight:bold;letter-spacing:-0.4px">[kip]</div>
<div class="t" style="left:1641px;top:206.7px;font-size:12px;color:#333;font-weight:bold;">Mx</div>
<div class="t" style="left:1641px;top:222.3px;font-size:12px;color:#333;font-weight:bold;letter-spacing:-0.4px">[kip.in]</div>
<div class="t" style="left:1691px;top:206.7px;font-size:12px;color:#333;font-weight:bold;">My</div>
<div class="t" style="left:1691px;top:222.3px;font-size:12px;color:#333;font-weight:bold;letter-spacing:-0.4px">[kip.in]</div>
<div class="t" style="left:1741px;top:206.7px;font-size:12px;color:#333;font-weight:bold;">Mz</div>
<div class="t" style="left:1741px;top:222.3px;font-size:12px;color:#333;font-weight:bold;letter-spacing:-0.4px">[kip.in]</div>
<div class="t" style="left:1416px;top:245.8px;font-size:11.7px;color:#333;">Member 1 / End</div>
<div class="t" style="left:1509px;top:245.7px;font-size:11.8px;color:#333;letter-spacing:-0.2px">-30.930</div>
<div class="t" style="left:1555px;top:245.7px;font-size:11.8px;color:#333;letter-spacing:-0.2px">-0.027</div>
<div class="t" style="left:1595px;top:245.7px;font-size:11.8px;color:#333;letter-spacing:-0.2px">6.500</div>
<div class="t" style="left:1641px;top:245.7px;font-size:11.8px;color:#333;letter-spacing:-0.2px">0.00</div>
<div class="t" style="left:1691px;top:245.7px;font-size:11.8px;color:#333;letter-spacing:-0.2px">0.00</div>
<div class="t" style="left:1741px;top:245.7px;font-size:11.8px;color:#333;letter-spacing:-0.2px">0.00</div>
<div class="t" style="left:1416px;top:274.8px;font-size:11.7px;color:#333;">Member 4 / End</div>
<div class="t" style="left:1509px;top:274.7px;font-size:11.8px;color:#333;letter-spacing:-0.2px">2.391</div>
<div class="t" style="left:1555px;top:274.7px;font-size:11.8px;color:#333;letter-spacing:-0.2px">0.000</div>
<div class="t" style="left:1595px;top:274.7px;font-size:11.8px;color:#333;letter-spacing:-0.2px">-0.076</div>
<div class="t" style="left:1641px;top:274.7px;font-size:11.8px;color:#333;letter-spacing:-0.2px">0.00</div>
<div class="t" style="left:1691px;top:274.7px;font-size:11.8px;color:#333;letter-spacing:-0.2px">0.00</div>
<div class="t" style="left:1741px;top:274.7px;font-size:11.8px;color:#333;letter-spacing:-0.2px">0.00</div>
<div class="t" style="left:1416px;top:303.8px;font-size:11.7px;color:#333;">Member 2 / End</div>
<div class="t" style="left:1509px;top:303.7px;font-size:11.8px;color:#333;letter-spacing:-0.2px">-14.143</div>
<div class="t" style="left:1555px;top:303.7px;font-size:11.8px;color:#333;letter-spacing:-0.2px">-4.484</div>
<div class="t" style="left:1595px;top:303.7px;font-size:11.8px;color:#333;letter-spacing:-0.2px">-22.871</div>
<div class="t" style="left:1641px;top:303.7px;font-size:11.8px;color:#333;letter-spacing:-0.2px">-3.75</div>
<div class="t" style="left:1691px;top:303.7px;font-size:11.8px;color:#333;letter-spacing:-0.2px">1797.79</div>
<div class="t" style="left:1741px;top:303.7px;font-size:11.8px;color:#333;letter-spacing:-0.2px">-1.23</div>
<div class="t" style="left:1416px;top:332.8px;font-size:11.7px;color:#333;">Member 3 / End</div>
<div class="t" style="left:1509px;top:332.7px;font-size:11.8px;color:#333;letter-spacing:-0.2px">2.412</div>
<div class="t" style="left:1555px;top:332.7px;font-size:11.8px;color:#333;letter-spacing:-0.2px">0.020</div>
<div class="t" style="left:1595px;top:332.7px;font-size:11.8px;color:#333;letter-spacing:-0.2px">-0.218</div>
<div class="t" style="left:1641px;top:332.7px;font-size:11.8px;color:#333;letter-spacing:-0.2px">0.07</div>
<div class="t" style="left:1691px;top:332.7px;font-size:11.8px;color:#333;letter-spacing:-0.2px">9.09</div>
<div class="t" style="left:1741px;top:332.7px;font-size:11.8px;color:#333;letter-spacing:-0.2px">1.72</div>
<svg style="left:1392px;top:245px" width="10" height="12"><path d="M2 1 L8 6 L2 11" fill="none" stroke="#333" stroke-width="1.4"/></svg>
<div class="t" style="left:1382.5px;top:376.9px;font-size:12px;color:#333;font-weight:bold;letter-spacing:-0.2px">Description</div>
<div class="t" style="left:1382.5px;top:391.8px;font-size:11.3px;color:#333;">1.35*DL1 + 1.5*LL1 + 1.5*WIND1 + 1.5*SNOW1 + LR1</div>
<div class="t" style="left:1382.5px;top:426.7px;font-size:11.6px;color:#333;">Values in disabled cells are not taken into account in CBFEM</div>
<div class="t" style="left:1382.5px;top:441.7px;font-size:11.6px;color:#333;">analysis. Members can be loaded only by that components of</div>
<div class="t" style="left:1382.5px;top:456.7px;font-size:11.6px;color:#333;">internal forces which are defined in member "Model type".</div>
<div class="t" style="left:1382.3px;top:926.5px;font-size:14px;color:#333;font-weight:bold;">Unbalanced forces</div>
<div class="abs" style="left:1392px;top:952px;width:331px;height:35px;background:#f0f0f0"></div>
<div class="abs" style="left:1392px;top:952px;width:1px;height:64px;background:#a8a8a8"></div>
<div class="abs" style="left:1447px;top:952px;width:1px;height:64px;background:#a8a8a8"></div>
<div class="abs" style="left:1502px;top:952px;width:1px;height:64px;background:#a8a8a8"></div>
<div class="abs" style="left:1557px;top:952px;width:1px;height:64px;background:#a8a8a8"></div>
<div class="abs" style="left:1612px;top:952px;width:1px;height:64px;background:#a8a8a8"></div>
<div class="abs" style="left:1667px;top:952px;width:1px;height:64px;background:#a8a8a8"></div>
<div class="abs" style="left:1723px;top:952px;width:1px;height:64px;background:#a8a8a8"></div>
<div class="abs" style="left:1392px;top:952px;width:332px;height:1px;background:#a8a8a8"></div>
<div class="abs" style="left:1392px;top:987px;width:332px;height:1px;background:#a8a8a8"></div>
<div class="abs" style="left:1392px;top:1015px;width:332px;height:1px;background:#a8a8a8"></div>
<div class="abs" style="left:1392px;top:1016px;width:332px;height:1px;background:#c8c8c8"></div>
<div class="t" style="left:1397px;top:957.1px;font-size:12px;color:#333;font-weight:bold;">X</div>
<div class="t" style="left:1397px;top:971.7px;font-size:11.5px;color:#333;font-weight:bold;letter-spacing:-0.3px">[kip]</div>
<div class="t" style="left:1397px;top:996.3px;font-size:11.8px;color:#333;letter-spacing:-0.2px">-15.903</div>
<div class="t" style="left:1452px;top:957.1px;font-size:12px;color:#333;font-weight:bold;">Y</div>
<div class="t" style="left:1452px;top:971.7px;font-size:11.5px;color:#333;font-weight:bold;letter-spacing:-0.3px">[kip]</div>
<div class="t" style="left:1452px;top:996.3px;font-size:11.8px;color:#333;letter-spacing:-0.2px">-0.014</div>
<div class="t" style="left:1507px;top:957.1px;font-size:12px;color:#333;font-weight:bold;">Z</div>
<div class="t" style="left:1507px;top:971.7px;font-size:11.5px;color:#333;font-weight:bold;letter-spacing:-0.3px">[kip]</div>
<div class="t" style="left:1507px;top:996.3px;font-size:11.8px;color:#333;letter-spacing:-0.2px">4.246</div>
<div class="t" style="left:1562px;top:957.1px;font-size:12px;color:#333;font-weight:bold;">Mx</div>
<div class="t" style="left:1562px;top:971.7px;font-size:11.5px;color:#333;font-weight:bold;letter-spacing:-0.3px">[kip.in]</div>
<div class="t" style="left:1562px;top:996.3px;font-size:11.8px;color:#333;letter-spacing:-0.2px">-27.78</div>
<div class="t" style="left:1617px;top:957.1px;font-size:12px;color:#333;font-weight:bold;">My</div>
<div class="t" style="left:1617px;top:971.7px;font-size:11.5px;color:#333;font-weight:bold;letter-spacing:-0.3px">[kip.in]</div>
<div class="t" style="left:1617px;top:996.3px;font-size:11.8px;color:#333;letter-spacing:-0.2px">1819.98</div>
<div class="t" style="left:1672px;top:957.1px;font-size:12px;color:#333;font-weight:bold;">Mz</div>
<div class="t" style="left:1672px;top:971.7px;font-size:11.5px;color:#333;font-weight:bold;letter-spacing:-0.3px">[kip.in]</div>
<div class="t" style="left:1672px;top:996.3px;font-size:11.8px;color:#333;letter-spacing:-0.2px">-1.60</div>
<div class="abs" style="left:1328px;top:303px;width:10px;height:709px;background:#efefef"></div>
<div class="abs" style="left:1328px;top:303px;width:10px;height:335px;background:#cdcdcd"></div>
<svg style="left:1175px;top:311.3px" width="7" height="7"><path d="M6.5 0.5 V6.5 H0.5 Z" fill="#333"/></svg>
<div class="t" style="left:1198.9px;top:307.5px;font-size:13.4px;color:#333;font-weight:bold;letter-spacing:-0.3px">Members</div>
<div class="abs" style="left:1198px;top:329.8px;width:11px;height:11px;background:#e4e4e4;border-radius:2px"></div>
<svg style="left:1199px;top:327.8px" width="14" height="14"><path d="M1.5 7.5 L4.5 11 L11 2" fill="none" stroke="#f7931e" stroke-width="2.2"/></svg>
<div class="t" style="left:1225.5px;top:329.7px;font-size:13px;color:#333;text-decoration:underline;">Member 1</div>
<div class="abs" style="left:1198px;top:351.8px;width:11px;height:11px;background:#e4e4e4;border-radius:2px"></div>
<svg style="left:1199px;top:349.8px" width="14" height="14"><path d="M1.5 7.5 L4.5 11 L11 2" fill="none" stroke="#f7931e" stroke-width="2.2"/></svg>
<div class="t" style="left:1225.5px;top:351.7px;font-size:13px;color:#333;">Member 2</div>
<div class="abs" style="left:1198px;top:373.8px;width:11px;height:11px;background:#e4e4e4;border-radius:2px"></div>
<svg style="left:1199px;top:371.8px" width="14" height="14"><path d="M1.5 7.5 L4.5 11 L11 2" fill="none" stroke="#f7931e" stroke-width="2.2"/></svg>
<div class="t" style="left:1225.5px;top:373.7px;font-size:13px;color:#333;">Member 3</div>
<div class="abs" style="left:1198px;top:395.8px;width:11px;height:11px;background:#e4e4e4;border-radius:2px"></div>
<svg style="left:1199px;top:393.8px" width="14" height="14"><path d="M1.5 7.5 L4.5 11 L11 2" fill="none" stroke="#f7931e" stroke-width="2.2"/></svg>
<div class="t" style="left:1225.5px;top:395.7px;font-size:13px;color:#333;">Member 4</div>
<svg style="left:1175px;top:421.3px" width="7" height="7"><path d="M6.5 0.5 V6.5 H0.5 Z" fill="#333"/></svg>
<div class="t" style="left:1198.9px;top:417.5px;font-size:13.4px;color:#333;font-weight:bold;letter-spacing:-0.3px">Load effects</div>
<svg style="left:1188px;top:435.0px" width="136" height="21"><path d="M0 0 H122 L135.6 10.5 L122 21 H0 Z" fill="#f07022"/></svg>
<div class="abs" style="left:1198px;top:439.8px;width:11px;height:11px;background:#e4e4e4;border-radius:2px"></div>
<svg style="left:1199px;top:437.8px" width="14" height="14"><path d="M1.5 7.5 L4.5 11 L11 2" fill="none" stroke="#f7931e" stroke-width="2.2"/></svg>
<div class="t" style="left:1225.5px;top:439.7px;font-size:13px;color:#fff;font-weight:bold;letter-spacing:-0.3px;">Com 1</div>
<div class="abs" style="left:1198px;top:461.8px;width:11px;height:11px;background:#e4e4e4;border-radius:2px"></div>
<svg style="left:1199px;top:459.8px" width="14" height="14"><path d="M1.5 7.5 L4.5 11 L11 2" fill="none" stroke="#f7931e" stroke-width="2.2"/></svg>
<div class="t" style="left:1225.5px;top:461.7px;font-size:13px;color:#333;">Com 2</div>
<svg style="left:1175px;top:487.3px" width="7" height="7"><path d="M6.5 0.5 V6.5 H0.5 Z" fill="#333"/></svg>
<div class="t" style="left:1198.9px;top:483.5px;font-size:13.4px;color:#333;font-weight:bold;letter-spacing:-0.3px">Operations</div>
<div class="abs" style="left:1198px;top:505.8px;width:11px;height:11px;background:#e4e4e4;border-radius:2px"></div>
<svg style="left:1199px;top:503.8px" width="14" height="14"><path d="M1.5 7.5 L4.5 11 L11 2" fill="none" stroke="#f7931e" stroke-width="2.2"/></svg>
<div class="t" style="left:1225.5px;top:505.7px;font-size:13px;color:#333;">Work plane 1</div>
<div class="abs" style="left:1198px;top:527.8px;width:11px;height:11px;background:#e4e4e4;border-radius:2px"></div>
<svg style="left:1199px;top:525.8px" width="14" height="14"><path d="M1.5 7.5 L4.5 11 L11 2" fill="none" stroke="#f7931e" stroke-width="2.2"/></svg>
<div class="t" style="left:1225.5px;top:527.7px;font-size:13px;color:#333;">Cut 1</div>
<div class="abs" style="left:1198px;top:549.8px;width:11px;height:11px;background:#e4e4e4;border-radius:2px"></div>
<svg style="left:1199px;top:547.8px" width="14" height="14"><path d="M1.5 7.5 L4.5 11 L11 2" fill="none" stroke="#f7931e" stroke-width="2.2"/></svg>
<div class="t" style="left:1225.5px;top:549.7px;font-size:13px;color:#333;">Work plane 2</div>
<div class="abs" style="left:1198px;top:571.8px;width:11px;height:11px;background:#e4e4e4;border-radius:2px"></div>
<svg style="left:1199px;top:569.8px" width="14" height="14"><path d="M1.5 7.5 L4.5 11 L11 2" fill="none" stroke="#f7931e" stroke-width="2.2"/></svg>
<div class="t" style="left:1225.5px;top:571.7px;font-size:13px;color:#333;">Cut 2</div>
<div class="abs" style="left:1198px;top:593.8px;width:11px;height:11px;background:#e4e4e4;border-radius:2px"></div>
<svg style="left:1199px;top:591.8px" width="14" height="14"><path d="M1.5 7.5 L4.5 11 L11 2" fill="none" stroke="#f7931e" stroke-width="2.2"/></svg>
<div class="t" style="left:1225.5px;top:593.7px;font-size:13px;color:#333;">Work plane 3</div>
<div class="abs" style="left:1198px;top:615.8px;width:11px;height:11px;background:#e4e4e4;border-radius:2px"></div>
<svg style="left:1199px;top:613.8px" width="14" height="14"><path d="M1.5 7.5 L4.5 11 L11 2" fill="none" stroke="#f7931e" stroke-width="2.2"/></svg>
<div class="t" style="left:1225.5px;top:615.7px;font-size:13px;color:#333;">Cut 3</div>
<div class="abs" style="left:1198px;top:637.8px;width:11px;height:11px;background:#e4e4e4;border-radius:2px"></div>
<svg style="left:1199px;top:635.8px" width="14" height="14"><path d="M1.5 7.5 L4.5 11 L11 2" fill="none" stroke="#f7931e" stroke-width="2.2"/></svg>
<div class="t" style="left:1225.5px;top:637.7px;font-size:13px;color:#333;">Work plane 4</div>
<div class="abs" style="left:1198px;top:659.8px;width:11px;height:11px;background:#e4e4e4;border-radius:2px"></div>
<svg style="left:1199px;top:657.8px" width="14" height="14"><path d="M1.5 7.5 L4.5 11 L11 2" fill="none" stroke="#f7931e" stroke-width="2.2"/></svg>
<div class="t" style="left:1225.5px;top:659.7px;font-size:13px;color:#333;">Cut 4</div>
<div class="abs" style="left:1198px;top:681.8px;width:11px;height:11px;background:#e4e4e4;border-radius:2px"></div>
<svg style="left:1199px;top:679.8px" width="14" height="14"><path d="M1.5 7.5 L4.5 11 L11 2" fill="none" stroke="#f7931e" stroke-width="2.2"/></svg>
<div class="t" style="left:1225.5px;top:681.7px;font-size:13px;color:#333;">Plate 1</div>
<div class="abs" style="left:1198px;top:703.8px;width:11px;height:11px;background:#e4e4e4;border-radius:2px"></div>
<svg style="left:1199px;top:701.8px" width="14" height="14"><path d="M1.5 7.5 L4.5 11 L11 2" fill="none" stroke="#f7931e" stroke-width="2.2"/></svg>
<div class="t" style="left:1225.5px;top:703.7px;font-size:13px;color:#333;">Plate 2</div>
<div class="abs" style="left:1198px;top:725.8px;width:11px;height:11px;background:#e4e4e4;border-radius:2px"></div>
<svg style="left:1199px;top:723.8px" width="14" height="14"><path d="M1.5 7.5 L4.5 11 L11 2" fill="none" stroke="#f7931e" stroke-width="2.2"/></svg>
<div class="t" style="left:1225.5px;top:725.7px;font-size:13px;color:#333;">Plate 3</div>
<div class="abs" style="left:1198px;top:747.8px;width:11px;height:11px;background:#e4e4e4;border-radius:2px"></div>
<svg style="left:1199px;top:745.8px" width="14" height="14"><path d="M1.5 7.5 L4.5 11 L11 2" fill="none" stroke="#f7931e" stroke-width="2.2"/></svg>
<div class="t" style="left:1225.5px;top:747.7px;font-size:13px;color:#333;">Plate 4</div>
<div class="abs" style="left:1198px;top:769.8px;width:11px;height:11px;background:#e4e4e4;border-radius:2px"></div>
<svg style="left:1199px;top:767.8px" width="14" height="14"><path d="M1.5 7.5 L4.5 11 L11 2" fill="none" stroke="#f7931e" stroke-width="2.2"/></svg>
<div class="t" style="left:1225.5px;top:769.7px;font-size:13px;color:#333;">Plate 5</div>
<div class="abs" style="left:1198px;top:791.8px;width:11px;height:11px;background:#e4e4e4;border-radius:2px"></div>
<svg style="left:1199px;top:789.8px" width="14" height="14"><path d="M1.5 7.5 L4.5 11 L11 2" fill="none" stroke="#f7931e" stroke-width="2.2"/></svg>
<div class="t" style="left:1225.5px;top:791.7px;font-size:13px;color:#333;">Plate 6</div>
<div class="abs" style="left:1198px;top:813.8px;width:11px;height:11px;background:#e4e4e4;border-radius:2px"></div>
<svg style="left:1199px;top:811.8px" width="14" height="14"><path d="M1.5 7.5 L4.5 11 L11 2" fill="none" stroke="#f7931e" stroke-width="2.2"/></svg>
<div class="t" style="left:1225.5px;top:813.7px;font-size:13px;color:#333;">Plate 7</div>
<div class="abs" style="left:1198px;top:835.8px;width:11px;height:11px;background:#e4e4e4;border-radius:2px"></div>
<svg style="left:1199px;top:833.8px" width="14" height="14"><path d="M1.5 7.5 L4.5 11 L11 2" fill="none" stroke="#f7931e" stroke-width="2.2"/></svg>
<div class="t" style="left:1225.5px;top:835.7px;font-size:13px;color:#333;">Plate 8</div>
<div class="abs" style="left:1198px;top:857.8px;width:11px;height:11px;background:#e4e4e4;border-radius:2px"></div>
<svg style="left:1199px;top:855.8px" width="14" height="14"><path d="M1.5 7.5 L4.5 11 L11 2" fill="none" stroke="#f7931e" stroke-width="2.2"/></svg>
<div class="t" style="left:1225.5px;top:857.7px;font-size:13px;color:#333;">Plate 9</div>
<div class="abs" style="left:1198px;top:879.8px;width:11px;height:11px;background:#e4e4e4;border-radius:2px"></div>
<svg style="left:1199px;top:877.8px" width="14" height="14"><path d="M1.5 7.5 L4.5 11 L11 2" fill="none" stroke="#f7931e" stroke-width="2.2"/></svg>
<div class="t" style="left:1225.5px;top:879.7px;font-size:13px;color:#333;">Plate 10</div>
<div class="abs" style="left:1198px;top:901.8px;width:11px;height:11px;background:#e4e4e4;border-radius:2px"></div>
<svg style="left:1199px;top:899.8px" width="14" height="14"><path d="M1.5 7.5 L4.5 11 L11 2" fill="none" stroke="#f7931e" stroke-width="2.2"/></svg>
<div class="t" style="left:1225.5px;top:901.7px;font-size:13px;color:#333;">Plate 11</div>
<div class="abs" style="left:1198px;top:923.8px;width:11px;height:11px;background:#e4e4e4;border-radius:2px"></div>
<svg style="left:1199px;top:921.8px" width="14" height="14"><path d="M1.5 7.5 L4.5 11 L11 2" fill="none" stroke="#f7931e" stroke-width="2.2"/></svg>
<div class="t" style="left:1225.5px;top:923.7px;font-size:13px;color:#333;">Plate 12</div>
<div class="abs" style="left:1198px;top:945.8px;width:11px;height:11px;background:#e4e4e4;border-radius:2px"></div>
<svg style="left:1199px;top:943.8px" width="14" height="14"><path d="M1.5 7.5 L4.5 11 L11 2" fill="none" stroke="#f7931e" stroke-width="2.2"/></svg>
<div class="t" style="left:1225.5px;top:945.7px;font-size:13px;color:#333;">Plate 13</div>
<div class="abs" style="left:1198px;top:967.8px;width:11px;height:11px;background:#e4e4e4;border-radius:2px"></div>
<svg style="left:1199px;top:965.8px" width="14" height="14"><path d="M1.5 7.5 L4.5 11 L11 2" fill="none" stroke="#f7931e" stroke-width="2.2"/></svg>
<div class="t" style="left:1225.5px;top:967.7px;font-size:13px;color:#333;">Bolts 1</div>
<div class="abs" style="left:1198px;top:989.8px;width:11px;height:11px;background:#e4e4e4;border-radius:2px"></div>
<svg style="left:1199px;top:987.8px" width="14" height="14"><path d="M1.5 7.5 L4.5 11 L11 2" fill="none" stroke="#f7931e" stroke-width="2.2"/></svg>
<div class="t" style="left:1225.5px;top:989.7px;font-size:13px;color:#333;">Bolts 2</div>
<div class="abs" style="left:1206px;top:1010px;width:6px;height:2px;background:#f7931e"></div>
<div style="position:absolute;left:0;top:1048px;width:1858px;height:32px;background:#1c1c1c;overflow:hidden"><div style="position:absolute;left:0;top:0px;width:1858px;height:1px;background:linear-gradient(90deg,rgb(18,18,18) 0%,rgb(38,38,38) 9%,rgb(22,22,22) 27%,rgb(30,30,30) 49%,rgb(52,52,52) 68%,rgb(44,44,44) 79%,rgb(30,30,30) 96%)"></div><div style="position:absolute;left:0;top:1px;width:1858px;height:1px;background:linear-gradient(90deg,rgb(30,30,30) 0%,rgb(26,26,26) 17%,rgb(52,52,52) 32%,rgb(18,18,18) 54%,rgb(22,22,22) 66%,rgb(52,52,52) 76%)"></div><div style="position:absolute;left:0;top:2px;width:1858px;height:1px;background:linear-gradient(90deg,rgb(44,44,44) 0%,rgb(44,44,44) 20%,rgb(44,44,44) 48%,rgb(52,52,52) 65%,rgb(18,18,18) 78%,rgb(52,52,52) 90%,rgb(26,26,26) 100%)"></div><div style="position:absolute;left:0;top:3px;width:1858px;height:1px;background:linear-gradient(90deg,rgb(62,62,62) 0%,rgb(14,14,14) 12%,rgb(38,38,38) 37%,rgb(52,52,52) 53%,rgb(30,30,30) 66%,rgb(14,14,14) 81%)"></div><div style="position:absolute;left:0;top:4px;width:1858px;height:1px;background:linear-gradient(90deg,rgb(62,62,62) 0%,rgb(22,22,22) 29%,rgb(52,52,52) 52%,rgb(26,26,26) 74%,rgb(26,26,26) 84%)"></div><div style="position:absolute;left:0;top:5px;width:1858px;height:1px;background:linear-gradient(90deg,rgb(44,44,44) 0%,rgb(30,30,30) 18%,rgb(14,14,14) 44%,rgb(38,38,38) 55%,rgb(44,44,44) 79%)"></div><div style="position:absolute;left:0;top:6px;width:1858px;height:1px;background:linear-gradient(90deg,rgb(44,44,44) 0%,rgb(38,38,38) 8%,rgb(52,52,52) 36%,rgb(44,44,44) 63%,rgb(18,18,18) 77%,rgb(22,22,22) 90%)"></div><div style="position:absolute;left:0;top:7px;width:1858px;height:1px;background:linear-gradient(90deg,rgb(18,18,18) 0%,rgb(44,44,44) 29%,rgb(14,14,14) 39%,rgb(22,22,22) 47%,rgb(14,14,14) 60%,rgb(30,30,30) 82%)"></div><div style="position:absolute;left:0;top:8px;width:1858px;height:1px;background:linear-gradient(90deg,rgb(30,30,30) 0%,rgb(38,38,38) 20%,rgb(18,18,18) 43%,rgb(30,30,30) 53%,rgb(62,62,62) 73%,rgb(30,30,30) 85%,rgb(62,62,62) 98%)"></div><div style="position:absolute;left:0;top:9px;width:1858px;height:1px;background:linear-gradient(90deg,rgb(52,52,52) 0%,rgb(44,44,44) 15%,rgb(34,34,34) 29%,rgb(26,26,26) 51%,rgb(26,26,26) 69%,rgb(14,14,14) 89%)"></div><div style="position:absolute;left:0;top:10px;width:1858px;height:1px;background:linear-gradient(90deg,rgb(30,30,30) 0%,rgb(26,26,26) 9%,rgb(38,38,38) 28%,rgb(26,26,26) 38%,rgb(34,34,34) 61%,rgb(14,14,14) 74%,rgb(38,38,38) 97%)"></div><div style="position:absolute;left:0;top:11px;width:1858px;height:1px;background:linear-gradient(90deg,rgb(38,38,38) 0%,rgb(30,30,30) 12%,rgb(52,52,52) 37%,rgb(44,44,44) 46%,rgb(30,30,30) 75%)"></div><div style="position:absolute;left:0;top:12px;width:1858px;height:1px;background:linear-gradient(90deg,rgb(26,26,26) 0%,rgb(26,26,26) 13%,rgb(30,30,30) 27%,rgb(62,62,62) 37%,rgb(22,22,22) 56%,rgb(44,44,44) 84%)"></div><div style="position:absolute;left:0;top:13px;width:1858px;height:1px;background:linear-gradient(90deg,rgb(14,14,14) 0%,rgb(22,22,22) 29%,rgb(14,14,14) 57%,rgb(62,62,62) 70%,rgb(14,14,14) 81%)"></div><div style="position:absolute;left:0;top:14px;width:1858px;height:1px;background:linear-gradient(90deg,rgb(22,22,22) 0%,rgb(34,34,34) 17%,rgb(18,18,18) 41%,rgb(34,34,34) 69%,rgb(52,52,52) 81%)"></div><div style="position:absolute;left:0;top:15px;width:1858px;height:1px;background:linear-gradient(90deg,rgb(14,14,14) 0%,rgb(38,38,38) 15%,rgb(34,34,34) 41%,rgb(18,18,18) 59%,rgb(30,30,30) 67%,rgb(38,38,38) 77%)"></div><div style="position:absolute;left:0;top:16px;width:1858px;height:1px;background:linear-gradient(90deg,rgb(18,18,18) 0%,rgb(26,26,26) 20%,rgb(30,30,30) 37%,rgb(38,38,38) 63%,rgb(44,44,44) 73%,rgb(52,52,52) 85%)"></div><div style="position:absolute;left:0;top:17px;width:1858px;height:1px;background:linear-gradient(90deg,rgb(26,26,26) 0%,rgb(44,44,44) 15%,rgb(38,38,38) 24%,rgb(38,38,38) 37%,rgb(14,14,14) 46%,rgb(14,14,14) 64%,rgb(18,18,18) 78%)"></div><div style="position:absolute;left:0;top:18px;width:1858px;height:1px;background:linear-gradient(90deg,rgb(34,34,34) 0%,rgb(34,34,34) 16%,rgb(62,62,62) 45%,rgb(34,34,34) 54%,rgb(30,30,30) 82%,rgb(62,62,62) 90%)"></div><div style="position:absolute;left:0;top:19px;width:1858px;height:1px;background:linear-gradient(90deg,rgb(18,18,18) 0%,rgb(26,26,26) 9%,rgb(44,44,44) 19%,rgb(38,38,38) 48%,rgb(38,38,38) 73%,rgb(22,22,22) 99%)"></div><div style="position:absolute;left:0;top:20px;width:1858px;height:1px;background:linear-gradient(90deg,rgb(22,22,22) 0%,rgb(30,30,30) 8%,rgb(22,22,22) 34%,rgb(34,34,34) 56%,rgb(44,44,44) 83%,rgb(62,62,62) 99%)"></div><div style="position:absolute;left:0;top:21px;width:1858px;height:1px;background:linear-gradient(90deg,rgb(26,26,26) 0%,rgb(22,22,22) 17%,rgb(18,18,18) 30%,rgb(44,44,44) 52%,rgb(34,34,34) 73%,rgb(38,38,38) 84%)"></div><div style="position:absolute;left:0;top:22px;width:1858px;height:1px;background:linear-gradient(90deg,rgb(18,18,18) 0%,rgb(18,18,18) 14%,rgb(38,38,38) 26%,rgb(44,44,44) 45%,rgb(22,22,22) 57%,rgb(62,62,62) 74%)"></div><div style="position:absolute;left:0;top:23px;width:1858px;height:1px;background:linear-gradient(90deg,rgb(26,26,26) 0%,rgb(18,18,18) 24%,rgb(30,30,30) 50%,rgb(62,62,62) 64%,rgb(30,30,30) 78%)"></div><div style="position:absolute;left:0;top:24px;width:1858px;height:1px;background:linear-gradient(90deg,rgb(26,26,26) 0%,rgb(22,22,22) 18%,rgb(22,22,22) 31%,rgb(62,62,62) 45%,rgb(18,18,18) 57%,rgb(26,26,26) 74%,rgb(26,26,26) 93%)"></div><div style="position:absolute;left:0;top:25px;width:1858px;height:1px;background:linear-gradient(90deg,rgb(18,18,18) 0%,rgb(14,14,14) 22%,rgb(44,44,44) 33%,rgb(26,26,26) 60%,rgb(34,34,34) 87%,rgb(30,30,30) 95%)"></div><div style="position:absolute;left:0;top:26px;width:1858px;height:1px;background:linear-gradient(90deg,rgb(14,14,14) 0%,rgb(62,62,62) 12%,rgb(18,18,18) 24%,rgb(22,22,22) 41%,rgb(30,30,30) 59%,rgb(14,14,14) 84%,rgb(62,62,62) 94%)"></div><div style="position:absolute;left:0;top:27px;width:1858px;height:1px;background:linear-gradient(90deg,rgb(34,34,34) 0%,rgb(34,34,34) 13%,rgb(14,14,14) 28%,rgb(30,30,30) 41%,rgb(26,26,26) 50%,rgb(34,34,34) 76%,rgb(34,34,34) 93%)"></div><div style="position:absolute;left:0;top:28px;width:1858px;height:1px;background:linear-gradient(90deg,rgb(30,30,30) 0%,rgb(14,14,14) 10%,rgb(52,52,52) 35%,rgb(38,38,38) 54%,rgb(38,38,38) 64%,rgb(22,22,22) 87%)"></div><div style="position:absolute;left:0;top:29px;width:1858px;height:1px;background:linear-gradient(90deg,rgb(18,18,18) 0%,rgb(38,38,38) 22%,rgb(38,38,38) 46%,rgb(30,30,30) 75%,rgb(14,14,14) 93%)"></div><div style="position:absolute;left:0;top:30px;width:1858px;height:1px;background:linear-gradient(90deg,rgb(62,62,62) 0%,rgb(38,38,38) 27%,rgb(34,34,34) 45%,rgb(38,38,38) 67%,rgb(26,26,26) 91%)"></div><div style="position:absolute;left:0;top:31px;width:1858px;height:1px;background:linear-gradient(90deg,rgb(38,38,38) 0%,rgb(38,38,38) 28%,rgb(18,18,18) 38%,rgb(34,34,34) 55%,rgb(22,22,22) 73%,rgb(14,14,14) 84%)"></div><div style="position:absolute;left:0;top:0;width:1858px;height:100%;background:linear-gradient(90deg,rgba(0,0,0,.45) 0%,rgba(0,0,0,.2) 12%,rgba(0,0,0,0) 40%,rgba(0,0,0,.05) 60%,rgba(0,0,0,.35) 78%,rgba(0,0,0,.2) 100%)"></div></div>
<div class="t" style="left:23.2px;top:1059.8px;font-size:12px;color:#8a8a8a;">Design code:</div>
<div class="t" style="left:99px;top:1059.9px;font-size:11.3px;color:#fff;font-weight:bold;">AISC - ASD</div>
<div class="t" style="left:179.9px;top:1059.8px;font-size:12px;color:#8a8a8a;letter-spacing:-0.3px">Analysis:</div>
<div class="t" style="left:230.9px;top:1059.9px;font-size:11.3px;color:#fff;font-weight:bold;">Stress, strain</div>
<div class="t" style="left:322px;top:1059.8px;font-size:12px;color:#8a8a8a;">Load effects:</div>
<div class="t" style="left:399.4px;top:1059.9px;font-size:11.5px;color:#fff;font-weight:bold;">In equilibrium</div>
<div class="t" style="left:496.3px;top:1059.9px;font-size:11.5px;color:#8a8a8a;letter-spacing:-0.3px">Units:</div>
<div class="t" style="left:536px;top:1059.8px;font-size:12px;color:#fff;font-weight:bold;">in</div>
<div class="t" style="right:10px;top:1059.6px;font-size:12px;color:#f07022">www.<span style="color:#fff">ideastatica</span>.com</div>
<svg style="left:0;top:0" width="1858" height="1080"><polygon points="375,362 407.5,333 407.5,368 375,397" fill="#2f3744" /><polygon points="395,371 421.6,372.3 421.6,374.5 407.7,384.6 380,386" fill="#5f7391" /><path d="M421.6 373 L407.7 384.6" stroke="#a9c6ee" stroke-width="1"/><polygon points="388,309.3 421.6,318.9 363.5,368.3 329.9,358.7" fill="#5f7391" /><polygon points="421.6,318.9 421.6,321.8 363.5,371.2 363.5,368.3" fill="#6f86a8" /><path d="M329.9 358.7 L388 309.3 L421.6 318.9 L363.5 368.3" fill="none" stroke="#a9c6ee" stroke-width="1"/><polygon points="389.6,376 402.4,374.5 402.4,384.6 389.6,384.6" fill="#c8642a" /><polygon points="337,426 400,372 402,374 402,854 337,910.6" fill="#43291c" /><path d="M402 374 V854 L337 910.6" fill="none" stroke="#c8642a" stroke-width="1.2"/><polygon points="219.2,395 226.7,398 226.5,879.3 219.3,878" fill="#98522a" /><path d="M219.8 396 V878.5 M226.2 398 V879" stroke="#d8682a" stroke-width="1"/><polygon points="226.7,398 256.7,408 257,852.8 226.5,878" fill="#43291c" /><polygon points="256.7,408 329.2,430 329,872 257,852.8" fill="#98522a" /><polygon points="329.2,428 336.7,431 337,910.6 329,908" fill="#98522a" /><path d="M329.6 429 V908.5 M336.2 431 V910" stroke="#d8682a" stroke-width="1"/><polygon points="221.3,394.8 287,337 400,370.7 333.3,428" fill="#2d3a5e" /><polygon points="221.3,394.8 333.3,428 334,432.5 221.3,398.3" fill="#2f3f6e" /><path d="M221.3 394.8 L333.3 428 L400 370.7 M221.5 398.3 L334 432.5" fill="none" stroke="#3f5aa8" stroke-width="1"/><path d="M221.3 394.8 L287 337 L400 370.7" fill="none" stroke="#34498a" stroke-width="0.9"/><polygon points="333.3,428 400,370.7 400,374.5 333.3,431.7" fill="#33467e" /><polygon points="336,430 401,372 401,380 360,418 360,727.5 349.3,723.3 349.3,424" fill="#2e3f6e" /><path d="M335 429.5 L400 372.5" stroke="#1a2038" stroke-width="2.2"/><path d="M336.5 432 L350 420.5" stroke="#e0702a" stroke-width="1.6"/><path d="M350.4 419 L397 384.4" stroke="#4060a8" stroke-width="0.8"/><polygon points="390,384.6 402.4,374 402.4,384.6" fill="#43291c" /><path d="M389 384 L401.5 374.5 V384" stroke="#e0702a" stroke-width="1.4" fill="none"/><polygon points="360,418 397.4,384.8 397.4,560 360,727.5" fill="#1d2130" /><path d="M360 418 V727.5" stroke="#4060a8" stroke-width="0.8"/><polygon points="397,534.5 1050.6,594.3 1013,627.3 358.5,569.6" fill="#6a7f9c" /><polygon points="358.5,569.6 1013,627.3 1013.6,633.5 358.5,576" fill="#647893" /><polygon points="1013,627.3 1050.6,594.3 1052.4,599.6 1013.6,633.5" fill="#7b7f8c" /><path d="M358.5 569.6 L1013 627.3 L1050.6 594.3 M1013 627.3 L1013.6 633.5 L1052.4 599.6 L1050.6 594.3" fill="none" stroke="#a9c6ee" stroke-width="1"/><path d="M358.5 576 L1013.6 633.5" fill="none" stroke="#a9c6ee" stroke-width="0.8"/><polygon points="375,421 1002.5,460 1031.5,613.5 378,552" fill="#647893" /><path d="M1002.5 460 L1031.5 613.5 M1004.5 460 L1033 613" stroke="#a9c6ee" stroke-width="0.9"/><polygon points="397.4,384.8 1022,440.3 983.6,473.1 358.5,418.5" fill="#6a7f9c" /><polygon points="358.5,418.5 983.6,473.1 984.8,479.5 358.5,423.7" fill="#647893" /><polygon points="983.6,473.1 1022,440.3 1023.2,446 984.8,479.5" fill="#7b7f8c" /><path d="M358.5 418.5 L397.4 384.8 L1022 440.3 L983.6 473.1 L358.5 418.5 M983.6 473.1 L984.8 479.5 L1023.2 446 L1022 440.3" fill="none" stroke="#a9c6ee" stroke-width="1"/><path d="M358.5 423.7 L984.8 479.5" fill="none" stroke="#a9c6ee" stroke-width="0.9"/><polygon points="360,577.5 381,578 381,700 378,713 360,727.5" fill="#1d2130" /><polygon points="379,577 791,615.6 379,698" fill="#2e3a5e" /><polygon points="360,712 377,700 756,612 791,615.6" fill="#34457a" /><path d="M363 710.5 L788 615.8" stroke="#4565b0" stroke-width="0.9"/><path d="M377 698.5 L752 611" stroke="#e8c417" stroke-width="4.5"/><polygon points="768.9,532.6 788,517.8 804.4,586 783.7,605" fill="#6b7282" /><path d="M767 532 L784 605.5" stroke="#3a4f98" stroke-width="2.5"/><path d="M767 532 L786 518" stroke="#3a4f98" stroke-width="2"/><path d="M789.5 519.5 L803.5 585.5" stroke="#f0c818" stroke-width="6" stroke-linecap="round"/><path d="M789.5 519.5 L803.5 585.5" stroke="#4a3e0e" stroke-width="3.2"/><path d="M786.5 603.5 L801 592" stroke="#f0c818" stroke-width="6" stroke-linecap="round"/><path d="M786.5 603.5 L801 592" stroke="#4a3e0e" stroke-width="3.2"/><path d="M378.2 440 V692" stroke="#f0c818" stroke-width="4"/><path d="M378.2 440 V692" stroke="#3a300a" stroke-width="2"/><g transform="translate(362.0,425.4) scale(1,0.9)" stroke-linejoin="round"><path d="M1 12 Q1 3 6.5 1.3 L10.5 1 L19.5 2.5 L23 7 L24.8 13 L24.3 18 Q23.5 20.8 20 21.2 L12.8 22.4 L7 21.8 Q1 19.5 1 12 Z" fill="#6a5806" stroke="#ffd60a" stroke-width="1.1"/><path d="M5.3 4 Q2.5 12 5.3 21" fill="none" stroke="#ffd60a" stroke-width="0.9"/><path d="M8.8 2.4 L19.8 6 L14.4 13.9 L3.4 12.9 Z" fill="#7d6a0c"/><path d="M3.4 12.9 L14.4 13.9 L20.8 7.2 M8.8 2.4 L14.4 13.9 L12.8 22.4" fill="none" stroke="#ffd60a" stroke-width="0.9"/><path d="M14 8.5 L22 8 L23 20 L15 20.5 Z" fill="#d8b41a"/><path d="M15 10 Q18 9 20 10.5" fill="none" stroke="#fff2a0" stroke-width="1"/><ellipse cx="23" cy="14.2" rx="2.7" ry="6" fill="#4a3e06" stroke="#ffd60a" stroke-width="1"/></g><g transform="translate(362.0,447.1) scale(1,0.9)" stroke-linejoin="round"><path d="M1 12 Q1 3 6.5 1.3 L10.5 1 L19.5 2.5 L23 7 L24.8 13 L24.3 18 Q23.5 20.8 20 21.2 L12.8 22.4 L7 21.8 Q1 19.5 1 12 Z" fill="#6a5806" stroke="#ffd60a" stroke-width="1.1"/><path d="M5.3 4 Q2.5 12 5.3 21" fill="none" stroke="#ffd60a" stroke-width="0.9"/><path d="M8.8 2.4 L19.8 6 L14.4 13.9 L3.4 12.9 Z" fill="#7d6a0c"/><path d="M3.4 12.9 L14.4 13.9 L20.8 7.2 M8.8 2.4 L14.4 13.9 L12.8 22.4" fill="none" stroke="#ffd60a" stroke-width="0.9"/><path d="M14 8.5 L22 8 L23 20 L15 20.5 Z" fill="#d8b41a"/><path d="M15 10 Q18 9 20 10.5" fill="none" stroke="#fff2a0" stroke-width="1"/><ellipse cx="23" cy="14.2" rx="2.7" ry="6" fill="#4a3e06" stroke="#ffd60a" stroke-width="1"/></g><g transform="translate(362.0,472.4) scale(1,0.9)" stroke-linejoin="round"><path d="M1 12 Q1 3 6.5 1.3 L10.5 1 L19.5 2.5 L23 7 L24.8 13 L24.3 18 Q23.5 20.8 20 21.2 L12.8 22.4 L7 21.8 Q1 19.5 1 12 Z" fill="#6a5806" stroke="#ffd60a" stroke-width="1.1"/><path d="M5.3 4 Q2.5 12 5.3 21" fill="none" stroke="#ffd60a" stroke-width="0.9"/><path d="M8.8 2.4 L19.8 6 L14.4 13.9 L3.4 12.9 Z" fill="#7d6a0c"/><path d="M3.4 12.9 L14.4 13.9 L20.8 7.2 M8.8 2.4 L14.4 13.9 L12.8 22.4" fill="none" stroke="#ffd60a" stroke-width="0.9"/><path d="M14 8.5 L22 8 L23 20 L15 20.5 Z" fill="#d8b41a"/><path d="M15 10 Q18 9 20 10.5" fill="none" stroke="#fff2a0" stroke-width="1"/><ellipse cx="23" cy="14.2" rx="2.7" ry="6" fill="#4a3e06" stroke="#ffd60a" stroke-width="1"/></g><g transform="translate(362.0,538.4) scale(1,0.9)" stroke-linejoin="round"><path d="M1 12 Q1 3 6.5 1.3 L10.5 1 L19.5 2.5 L23 7 L24.8 13 L24.3 18 Q23.5 20.8 20 21.2 L12.8 22.4 L7 21.8 Q1 19.5 1 12 Z" fill="#6a5806" stroke="#ffd60a" stroke-width="1.1"/><path d="M5.3 4 Q2.5 12 5.3 21" fill="none" stroke="#ffd60a" stroke-width="0.9"/><path d="M8.8 2.4 L19.8 6 L14.4 13.9 L3.4 12.9 Z" fill="#7d6a0c"/><path d="M3.4 12.9 L14.4 13.9 L20.8 7.2 M8.8 2.4 L14.4 13.9 L12.8 22.4" fill="none" stroke="#ffd60a" stroke-width="0.9"/><path d="M14 8.5 L22 8 L23 20 L15 20.5 Z" fill="#d8b41a"/><path d="M15 10 Q18 9 20 10.5" fill="none" stroke="#fff2a0" stroke-width="1"/><ellipse cx="23" cy="14.2" rx="2.7" ry="6" fill="#4a3e06" stroke="#ffd60a" stroke-width="1"/></g><g transform="translate(362.0,576.7) scale(1,0.9)" stroke-linejoin="round"><path d="M1 12 Q1 3 6.5 1.3 L10.5 1 L19.5 2.5 L23 7 L24.8 13 L24.3 18 Q23.5 20.8 20 21.2 L12.8 22.4 L7 21.8 Q1 19.5 1 12 Z" fill="#6a5806" stroke="#ffd60a" stroke-width="1.1"/><path d="M5.3 4 Q2.5 12 5.3 21" fill="none" stroke="#ffd60a" stroke-width="0.9"/><path d="M8.8 2.4 L19.8 6 L14.4 13.9 L3.4 12.9 Z" fill="#7d6a0c"/><path d="M3.4 12.9 L14.4 13.9 L20.8 7.2 M8.8 2.4 L14.4 13.9 L12.8 22.4" fill="none" stroke="#ffd60a" stroke-width="0.9"/><path d="M14 8.5 L22 8 L23 20 L15 20.5 Z" fill="#d8b41a"/><path d="M15 10 Q18 9 20 10.5" fill="none" stroke="#fff2a0" stroke-width="1"/><ellipse cx="23" cy="14.2" rx="2.7" ry="6" fill="#4a3e06" stroke="#ffd60a" stroke-width="1"/></g><g transform="translate(362.0,650.7) scale(1,0.9)" stroke-linejoin="round"><path d="M1 12 Q1 3 6.5 1.3 L10.5 1 L19.5 2.5 L23 7 L24.8 13 L24.3 18 Q23.5 20.8 20 21.2 L12.8 22.4 L7 21.8 Q1 19.5 1 12 Z" fill="#6a5806" stroke="#ffd60a" stroke-width="1.1"/><path d="M5.3 4 Q2.5 12 5.3 21" fill="none" stroke="#ffd60a" stroke-width="0.9"/><path d="M8.8 2.4 L19.8 6 L14.4 13.9 L3.4 12.9 Z" fill="#7d6a0c"/><path d="M3.4 12.9 L14.4 13.9 L20.8 7.2 M8.8 2.4 L14.4 13.9 L12.8 22.4" fill="none" stroke="#ffd60a" stroke-width="0.9"/><path d="M14 8.5 L22 8 L23 20 L15 20.5 Z" fill="#d8b41a"/><path d="M15 10 Q18 9 20 10.5" fill="none" stroke="#fff2a0" stroke-width="1"/><ellipse cx="23" cy="14.2" rx="2.7" ry="6" fill="#4a3e06" stroke="#ffd60a" stroke-width="1"/></g><g transform="translate(362.0,674.5) scale(1,0.9)" stroke-linejoin="round"><path d="M1 12 Q1 3 6.5 1.3 L10.5 1 L19.5 2.5 L23 7 L24.8 13 L24.3 18 Q23.5 20.8 20 21.2 L12.8 22.4 L7 21.8 Q1 19.5 1 12 Z" fill="#6a5806" stroke="#ffd60a" stroke-width="1.1"/><path d="M5.3 4 Q2.5 12 5.3 21" fill="none" stroke="#ffd60a" stroke-width="0.9"/><path d="M8.8 2.4 L19.8 6 L14.4 13.9 L3.4 12.9 Z" fill="#7d6a0c"/><path d="M3.4 12.9 L14.4 13.9 L20.8 7.2 M8.8 2.4 L14.4 13.9 L12.8 22.4" fill="none" stroke="#ffd60a" stroke-width="0.9"/><path d="M14 8.5 L22 8 L23 20 L15 20.5 Z" fill="#d8b41a"/><path d="M15 10 Q18 9 20 10.5" fill="none" stroke="#fff2a0" stroke-width="1"/><ellipse cx="23" cy="14.2" rx="2.7" ry="6" fill="#4a3e06" stroke="#ffd60a" stroke-width="1"/></g><polygon points="226.1,691.9 255.7,666.9 329.4,687.7 329.4,721.5" fill="#2d3a5e" /><polygon points="226.1,691.9 329.4,721.5 329.4,724 226.1,694.6" fill="#3650a0" /><path d="M266 664.5 L329.4 687.5" stroke="#f5e040" stroke-width="5"/><path d="M229 689 L255 668" stroke="#f0c818" stroke-width="5"/><path d="M229 689 L255 668" stroke="#2a2618" stroke-width="3"/><g stroke-linejoin="round">
<path d="M417.5 316 Q421 301 433 301 Q444 302 447.5 315" fill="none" stroke="#6cff1a" stroke-width="3.6"/>
<path d="M417.5 316 Q421 301 433 301 Q444 302 447.5 315" fill="none" stroke="#4a7a2a" stroke-width="1.8"/>
<path d="M441 311 L450 314 L447 322 Z" fill="#2d5a10" stroke="#6cff1a" stroke-width="1"/>
<path d="M425.9 324.1 L439.1 312.7" stroke="#1e3a0a" stroke-width="2.6"/>
<path d="M408 333 Q420 326 432 336 L431 341 Q420 333 408 339 Z" fill="#5a9a30" stroke="#6cff1a" stroke-width="1"/>
<path d="M408 340 L431 342 L432 349 L422 352 L408 349 Z" fill="#2a5210" stroke="#6cff1a" stroke-width="1.1"/>
<path d="M421 321 Q428 322 431 331" fill="none" stroke="#6cff1a" stroke-width="2"/>
<path d="M410 345 L420 352 L413 355 Z" fill="#2a4a10"/>
</g><g stroke-linejoin="round">
<path d="M1049 542 L1088 543" stroke="#7cf050" stroke-width="1.5"/>
<path d="M1026 517 Q1040 521 1048 534 Q1047 546 1040 554" fill="none" stroke="#6cff1a" stroke-width="4.6"/>
<path d="M1026 517 Q1040 521 1048 534 Q1047 546 1040 554" fill="none" stroke="#3e6624" stroke-width="2.6"/>
<path d="M1018 547 L1022.5 535 L1026 540 L1034 533 L1038 541 L1032 548 L1035 556 L1030 558 L1026 552 Z" fill="#2d5a10" stroke="#6cff1a" stroke-width="1.3"/>
<path d="M1034.5 541 L1042 543 L1041.5 548 L1034 546.5 Z" fill="#111"/>
<path d="M1062 535 Q1078 536 1077 548 Q1074 558 1062 556" fill="none" stroke="#6cff1a" stroke-width="4.6"/>
<path d="M1062 535 Q1078 536 1077 548 Q1074 558 1062 556" fill="none" stroke="#3e6624" stroke-width="2.6"/>
<path d="M1053 553 L1059 547 L1065 556 Z" fill="#2d5a10" stroke="#6cff1a" stroke-width="1.1"/>
</g><g>
<path d="M291 873.6 L302.8 872.2 L312 869.4 L323 871.8 L325 875 L315.7 876.9 L299 880.6 L295.4 877.8 Z" fill="#c81010"/>
<path d="M302 873 L313 871 L320 874" fill="none" stroke="#5a0a0a" stroke-width="1.5"/>
<path d="M294 878 L330 883 L328 887 L300 886 Z" fill="#e05050" opacity="0.6"/>
<path d="M310.6 937 V910" stroke="#5a0a0a" stroke-width="2.6"/>
<path d="M309.5 937 V911" stroke="#e02020" stroke-width="0.8"/>
<path d="M306 911.1 L310.6 900.5 L315.7 911.1 Z" fill="#d01010"/>
<path d="M310.6 900.5 L315.7 911.1 L311 910 Z" fill="#6a0a0a"/>
</g><rect x="412" y="294.4" width="35.69999999999999" height="14.200000000000045" fill="rgba(140,140,140,0.55)"/><text x="414" y="305.3" font-family="Liberation Sans" font-size="11" fill="#000">-0.218</text><rect x="450.3" y="289" width="31.5" height="14.600000000000023" fill="rgba(140,140,140,0.55)"/><text x="452.3" y="300.3" font-family="Liberation Sans" font-size="11" fill="#000">2.412</text><rect x="444" y="307.4" width="25.69999999999999" height="14.300000000000011" fill="rgba(140,140,140,0.55)"/><text x="446" y="318.4" font-family="Liberation Sans" font-size="11" fill="#000">0.07</text><rect x="429.6" y="320" width="25.19999999999999" height="14.5" fill="rgba(140,140,140,0.55)"/><text x="431.6" y="331.2" font-family="Liberation Sans" font-size="11" fill="#000">1.72</text><rect x="418.4" y="328.7" width="25.30000000000001" height="13.800000000000011" fill="rgba(140,140,140,0.55)"/><text x="420.4" y="339.2" font-family="Liberation Sans" font-size="11" fill="#000">9.09</text><rect x="1025.5" y="496.3" width="42.40000000000009" height="13.199999999999989" fill="rgba(140,140,140,0.55)"/><text x="1027.5" y="506.2" font-family="Liberation Sans" font-size="11" fill="#000">-22.871</text><rect x="1044" y="511.5" width="35.59999999999991" height="11.0" fill="rgba(140,140,140,0.55)"/><text x="1046" y="519.2" font-family="Liberation Sans" font-size="11" fill="#000">-4.484</text><rect x="1024.8" y="518" width="27.5" height="13.299999999999955" fill="rgba(140,140,140,0.55)"/><text x="1026.8" y="528.0" font-family="Liberation Sans" font-size="11" fill="#000">-1.23</text><rect x="1070.7" y="521.6" width="29.59999999999991" height="10.600000000000023" fill="rgba(140,140,140,0.55)"/><text x="1072.7" y="528.9000000000001" font-family="Liberation Sans" font-size="11" fill="#000">-3.75</text><rect x="1094.4" y="529" width="42.0" height="14.799999999999955" fill="rgba(140,140,140,0.55)"/><text x="1096.4" y="540.5" font-family="Liberation Sans" font-size="11" fill="#000">-14.143</text><rect x="1042.6" y="537.3" width="44.40000000000009" height="13.300000000000068" fill="rgba(140,140,140,0.55)"/><text x="1044.6" y="547.3000000000001" font-family="Liberation Sans" font-size="11" fill="#000">1797.79</text><rect x="283" y="857" width="31.80000000000001" height="14.399999999999977" fill="rgba(140,140,140,0.55)"/><text x="285" y="868.1" font-family="Liberation Sans" font-size="11" fill="#000">6.500</text><rect x="295" y="877.4" width="35" height="13.899999999999977" fill="rgba(140,140,140,0.55)"/><text x="297" y="888.0" font-family="Liberation Sans" font-size="11" fill="#000">-0.027</text><rect x="310.2" y="930.6" width="42.60000000000002" height="14.199999999999932" fill="rgba(140,140,140,0.55)"/><text x="312.2" y="941.5" font-family="Liberation Sans" font-size="11" fill="#000">-30.930</text><rect x="604.4" y="500.8" width="66.60000000000002" height="18.099999999999966" fill="#fff"/><text x="606.4" y="515.6" font-family="Liberation Sans" font-size="12.9" fill="#000">Member 2</text><rect x="276.9" y="662.7" width="66.30000000000001" height="18.0" fill="#fff"/><text x="278.9" y="677.4000000000001" font-family="Liberation Sans" font-size="12.9" fill="#000">Member 1</text><ellipse cx="1296.5" cy="263" rx="37" ry="18.5" fill="none" stroke="#c2c2c2" stroke-width="9"/><polygon points="1289.7,215.9 1322.5,222.7 1304.8,238 1267.1,228.8" fill="#6e6e6e" stroke="#111" stroke-width="1.2" stroke-linejoin="round"/><polygon points="1267.1,228.8 1304.8,238 1303.1,274.3 1270.4,263" fill="#484848" stroke="#111" stroke-width="1.2" stroke-linejoin="round"/><polygon points="1304.8,238 1322.5,222.7 1320,255 1303.1,274.3" fill="#585858" stroke="#111" stroke-width="1.2" stroke-linejoin="round"/><path d="M1289.7 215.9 L1290 251 L1270.4 263 M1290 251 L1320 255" stroke="#777" stroke-width="0.6" fill="none"/><text x="1281" y="257" font-family="Liberation Sans" font-size="8" fill="#fff">+Y</text><path d="M1293 226 L1298 225 M1295 228 L1297 227" stroke="#fff" stroke-width="1"/><path d="M1312 248 L1314 245 L1312 243" stroke="#fff" stroke-width="1" fill="none"/><path d="M1258 247 L1268 245 M1264 243 L1266 249" stroke="#222" stroke-width="1.5"/><path d="M1327 268 L1338 271" stroke="#222" stroke-width="1.2" stroke-dasharray="2,1.5"/><path d="M1265 285 L1275 275 M1270 279 L1280 277" stroke="#222" stroke-width="2.5"/></svg>
</body></html>
